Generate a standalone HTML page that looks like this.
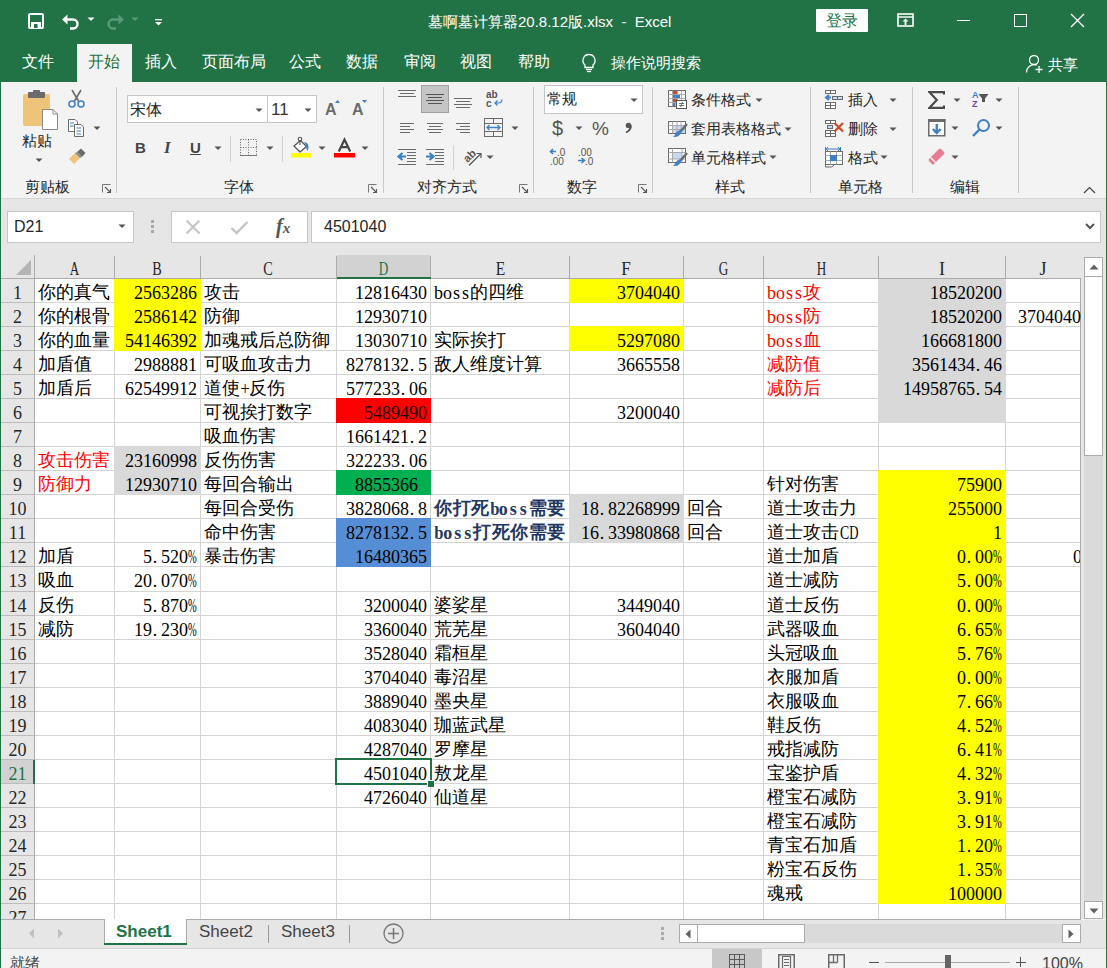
<!DOCTYPE html><html><head><meta charset="utf-8"><style>html,body{margin:0;padding:0;}body{width:1107px;height:968px;position:relative;overflow:hidden;background:#f3f3f3;font-family:"Liberation Sans",sans-serif;}.c{position:absolute;white-space:nowrap;overflow:hidden;font-family:"Liberation Serif",serif;font-size:18px;line-height:23px;color:#000;}.h{position:absolute;font-family:"Liberation Serif",serif;font-size:18px;line-height:23px;color:#262626;text-align:center;}.n{display:inline-block;width:9px;text-align:center;}</style></head><body>
<div style="position:absolute;left:0px;top:0px;width:1107px;height:82px;background:#217346"></div>
<svg style="position:absolute;left:27px;top:12px;" width="18" height="18" viewBox="0 0 18 18"><rect x="2" y="2" width="14" height="14" rx="1" fill="none" stroke="#fff" stroke-width="2"/><rect x="4" y="10" width="10" height="6" fill="#fff"/><rect x="7" y="12" width="3.5" height="4" fill="#217346"/></svg>
<svg style="position:absolute;left:61px;top:13px;" width="20" height="18" viewBox="0 0 20 18"><path d="M3 6.5 H12 A4.5 4.5 0 0 1 12 15.5 H9" fill="none" stroke="#fff" stroke-width="2.4"/><path d="M1 6.5 L6.5 1.5 L6.5 11.5 Z" fill="#fff"/></svg>
<svg style="position:absolute;left:87px;top:17px;" width="8" height="5" viewBox="0 0 8 5"><path d="M0.5 0.5 L7.5 0.5 L4 4 Z" fill="#fff"/></svg>
<svg style="position:absolute;left:105px;top:13px;" width="20" height="18" viewBox="0 0 20 18"><path d="M17 6.5 H8 A4.5 4.5 0 0 0 8 15.5 H11" fill="none" stroke="#5a9a78" stroke-width="2.4"/><path d="M19 6.5 L13.5 1.5 L13.5 11.5 Z" fill="#5a9a78"/></svg>
<svg style="position:absolute;left:131px;top:17px;" width="8" height="5" viewBox="0 0 8 5"><path d="M0.5 0.5 L7.5 0.5 L4 4 Z" fill="#5a9a78"/></svg>
<svg style="position:absolute;left:154px;top:18px;" width="9" height="9" viewBox="0 0 9 9"><rect x="1" y="1" width="7" height="1.3" fill="#fff"/><path d="M1 4 H8 L4.5 7.5 Z" fill="#fff"/></svg>
<div style="position:absolute;left:428px;top:12px;font-family:'Liberation Sans',sans-serif;font-size:15px;line-height:19px;color:#fff;white-space:nowrap;">墓啊墓计算器20.8.12版.xlsx&nbsp; -&nbsp; Excel</div>
<div style="position:absolute;left:816px;top:9px;width:52px;height:23px;background:#fff;border-radius:1px"></div>
<div style="position:absolute;left:826px;top:11px;font-family:'Liberation Sans',sans-serif;font-size:16px;line-height:20px;color:#217346;white-space:nowrap;">登录</div>
<svg style="position:absolute;left:897px;top:13px;" width="17" height="14" viewBox="0 0 17 14"><rect x="1" y="1" width="15" height="12" fill="none" stroke="#fff" stroke-width="1.6"/><line x1="1" y1="4" x2="16" y2="4" stroke="#fff" stroke-width="1.4"/><path d="M8.5 5.5 L5.5 8.5 H7.6 V12 H9.4 V8.5 H11.5 Z" fill="#fff"/></svg>
<div style="position:absolute;left:957px;top:20px;width:13px;height:1px;background:#fff"></div>
<div style="position:absolute;left:1014px;top:14px;width:11px;height:11px;border:1px solid #fff"></div>
<svg style="position:absolute;left:1070px;top:13px;" width="15" height="15" viewBox="0 0 15 15"><path d="M1 1 L14 14 M14 1 L1 14" stroke="#fff" stroke-width="1.3"/></svg>
<div style="position:absolute;left:77px;top:44px;width:55px;height:38px;background:#f3f3f3"></div>
<div style="position:absolute;left:22px;top:52px;font-family:'Liberation Sans',sans-serif;font-size:16px;line-height:20px;color:#fff;white-space:nowrap;">文件</div>
<div style="position:absolute;left:88px;top:52px;font-family:'Liberation Sans',sans-serif;font-size:16px;line-height:20px;color:#217346;white-space:nowrap;">开始</div>
<div style="position:absolute;left:145px;top:52px;font-family:'Liberation Sans',sans-serif;font-size:16px;line-height:20px;color:#fff;white-space:nowrap;">插入</div>
<div style="position:absolute;left:202px;top:52px;font-family:'Liberation Sans',sans-serif;font-size:16px;line-height:20px;color:#fff;white-space:nowrap;">页面布局</div>
<div style="position:absolute;left:289px;top:52px;font-family:'Liberation Sans',sans-serif;font-size:16px;line-height:20px;color:#fff;white-space:nowrap;">公式</div>
<div style="position:absolute;left:346px;top:52px;font-family:'Liberation Sans',sans-serif;font-size:16px;line-height:20px;color:#fff;white-space:nowrap;">数据</div>
<div style="position:absolute;left:404px;top:52px;font-family:'Liberation Sans',sans-serif;font-size:16px;line-height:20px;color:#fff;white-space:nowrap;">审阅</div>
<div style="position:absolute;left:460px;top:52px;font-family:'Liberation Sans',sans-serif;font-size:16px;line-height:20px;color:#fff;white-space:nowrap;">视图</div>
<div style="position:absolute;left:518px;top:52px;font-family:'Liberation Sans',sans-serif;font-size:16px;line-height:20px;color:#fff;white-space:nowrap;">帮助</div>
<div style="position:absolute;left:611px;top:53px;font-family:'Liberation Sans',sans-serif;font-size:15px;line-height:19px;color:#fff;white-space:nowrap;">操作说明搜索</div>
<svg style="position:absolute;left:580px;top:53px;" width="18" height="20" viewBox="0 0 18 20"><path d="M9 1.5 A6 6 0 0 0 5 12 V14.5 H13 V12 A6 6 0 0 0 9 1.5 Z" fill="none" stroke="#fff" stroke-width="1.3"/><line x1="6" y1="16.5" x2="12" y2="16.5" stroke="#fff" stroke-width="1.3"/><line x1="7" y1="18.5" x2="11" y2="18.5" stroke="#fff" stroke-width="1.3"/></svg>
<svg style="position:absolute;left:1025px;top:54px;" width="19" height="20" viewBox="0 0 19 20"><circle cx="9" cy="6" r="4.5" fill="none" stroke="#fff" stroke-width="1.3"/><path d="M1.5 18.5 A8 8 0 0 1 12 11" fill="none" stroke="#fff" stroke-width="1.3"/><path d="M14 12 V19 M10.5 15.5 H17.5" stroke="#fff" stroke-width="1.3"/></svg>
<div style="position:absolute;left:1048px;top:55px;font-family:'Liberation Sans',sans-serif;font-size:15px;line-height:19px;color:#fff;white-space:nowrap;">共享</div>
<div style="position:absolute;left:1px;top:82px;width:1105px;height:116px;background:#f3f3f3"></div>
<div style="position:absolute;left:1px;top:198px;width:1105px;height:1px;background:#d6d6d6"></div>
<div style="position:absolute;left:116px;top:87px;width:1px;height:106px;background:#c8c8c8"></div>
<div style="position:absolute;left:383px;top:87px;width:1px;height:106px;background:#c8c8c8"></div>
<div style="position:absolute;left:533px;top:87px;width:1px;height:106px;background:#c8c8c8"></div>
<div style="position:absolute;left:652px;top:87px;width:1px;height:106px;background:#c8c8c8"></div>
<div style="position:absolute;left:810px;top:87px;width:1px;height:106px;background:#c8c8c8"></div>
<div style="position:absolute;left:912px;top:87px;width:1px;height:106px;background:#c8c8c8"></div>
<div style="position:absolute;left:1018px;top:87px;width:1px;height:106px;background:#c8c8c8"></div>
<div style="position:absolute;left:25px;top:177px;font-family:'Liberation Sans',sans-serif;font-size:15px;line-height:19px;color:#262626;white-space:nowrap;">剪贴板</div>
<div style="position:absolute;left:224px;top:177px;font-family:'Liberation Sans',sans-serif;font-size:15px;line-height:19px;color:#262626;white-space:nowrap;">字体</div>
<div style="position:absolute;left:417px;top:177px;font-family:'Liberation Sans',sans-serif;font-size:15px;line-height:19px;color:#262626;white-space:nowrap;">对齐方式</div>
<div style="position:absolute;left:567px;top:177px;font-family:'Liberation Sans',sans-serif;font-size:15px;line-height:19px;color:#262626;white-space:nowrap;">数字</div>
<div style="position:absolute;left:715px;top:177px;font-family:'Liberation Sans',sans-serif;font-size:15px;line-height:19px;color:#262626;white-space:nowrap;">样式</div>
<div style="position:absolute;left:838px;top:177px;font-family:'Liberation Sans',sans-serif;font-size:15px;line-height:19px;color:#262626;white-space:nowrap;">单元格</div>
<div style="position:absolute;left:950px;top:177px;font-family:'Liberation Sans',sans-serif;font-size:15px;line-height:19px;color:#262626;white-space:nowrap;">编辑</div>
<svg style="position:absolute;left:102px;top:184px;" width="10" height="9" viewBox="0 0 10 9"><path d="M0.5 8.5 V0.5 H8.5" fill="none" stroke="#777" stroke-width="1"/><path d="M3 3 L8.5 8.5 M8.5 5 V8.5 H5" fill="none" stroke="#555" stroke-width="1.1"/></svg>
<svg style="position:absolute;left:368px;top:184px;" width="10" height="9" viewBox="0 0 10 9"><path d="M0.5 8.5 V0.5 H8.5" fill="none" stroke="#777" stroke-width="1"/><path d="M3 3 L8.5 8.5 M8.5 5 V8.5 H5" fill="none" stroke="#555" stroke-width="1.1"/></svg>
<svg style="position:absolute;left:519px;top:184px;" width="10" height="9" viewBox="0 0 10 9"><path d="M0.5 8.5 V0.5 H8.5" fill="none" stroke="#777" stroke-width="1"/><path d="M3 3 L8.5 8.5 M8.5 5 V8.5 H5" fill="none" stroke="#555" stroke-width="1.1"/></svg>
<svg style="position:absolute;left:638px;top:184px;" width="10" height="9" viewBox="0 0 10 9"><path d="M0.5 8.5 V0.5 H8.5" fill="none" stroke="#777" stroke-width="1"/><path d="M3 3 L8.5 8.5 M8.5 5 V8.5 H5" fill="none" stroke="#555" stroke-width="1.1"/></svg>
<svg style="position:absolute;left:1083px;top:186px;" width="13" height="8" viewBox="0 0 13 8"><path d="M1 7 L6.5 1.5 L12 7" fill="none" stroke="#444" stroke-width="1.2"/></svg>
<svg style="position:absolute;left:22px;top:90px;" width="37" height="41" viewBox="0 0 37 41"><rect x="1" y="4" width="27" height="32" rx="2" fill="#eec47b"/><rect x="6" y="2" width="17" height="6" rx="1" fill="#6b6b6b"/><rect x="11" y="0" width="7" height="4" rx="1" fill="#6b6b6b"/><path d="M20.5 19.5 H31 L35.5 24 V39.5 H20.5 Z" fill="#fff" stroke="#8a8a8a" stroke-width="1"/><path d="M31 19.5 V24 H35.5" fill="none" stroke="#8a8a8a" stroke-width="1"/></svg>
<div style="position:absolute;left:22px;top:131px;font-family:'Liberation Sans',sans-serif;font-size:15px;line-height:19px;color:#262626;white-space:nowrap;">粘贴</div>
<svg style="position:absolute;left:35px;top:158px;" width="8" height="5" viewBox="0 0 8 5"><path d="M0.5 0.5 L7.5 0.5 L4 4 Z" fill="#555"/></svg>
<svg style="position:absolute;left:67px;top:89px;" width="19" height="20" viewBox="0 0 19 20"><path d="M5 1 L11.5 12 M14 1 L7.5 12" stroke="#6b6b6b" stroke-width="1.6"/><circle cx="5" cy="15" r="3" fill="none" stroke="#3f7fc4" stroke-width="1.5"/><circle cx="14" cy="15" r="3" fill="none" stroke="#3f7fc4" stroke-width="1.5"/></svg>
<svg style="position:absolute;left:67px;top:118px;" width="19" height="20" viewBox="0 0 19 20"><path d="M1.5 1.5 H8 L10.5 4 V13.5 H1.5 Z" fill="#fff" stroke="#6b6b6b"/><path d="M7.5 6.5 H14 L16.5 9 V18.5 H7.5 Z" fill="#fff" stroke="#6b6b6b"/><path d="M3 5 H7 M3 8 H7 M9.5 10 H14 M9.5 13 H14 M9.5 16 H14" stroke="#3f7fc4" stroke-width="1"/></svg>
<svg style="position:absolute;left:93px;top:126px;" width="8" height="5" viewBox="0 0 8 5"><path d="M0.5 0.5 L7.5 0.5 L4 4 Z" fill="#555"/></svg>
<svg style="position:absolute;left:68px;top:148px;" width="19" height="18" viewBox="0 0 19 18"><path d="M1 11 L7 5 L12 10 L6 16 Z" fill="#eec47b"/><path d="M9 4 L13 0.5 L17.5 5 L14 9 Z" fill="#6b6b6b"/><path d="M7 5 L9 4 L14 9 L12 10 Z" fill="#8a8a8a"/></svg>
<div style="position:absolute;left:127px;top:95px;width:141px;height:28px;background:#fff;border:1px solid #c6c6c6;box-sizing:border-box"></div>
<div style="position:absolute;left:267px;top:95px;width:50px;height:28px;background:#fff;border:1px solid #c6c6c6;box-sizing:border-box"></div>
<div style="position:absolute;left:130px;top:100px;font-family:'Liberation Sans',sans-serif;font-size:16px;line-height:20px;color:#262626;white-space:nowrap;">宋体</div>
<div style="position:absolute;left:271px;top:99px;font-family:'Liberation Sans',sans-serif;font-size:17px;line-height:21px;color:#333;white-space:nowrap;">11</div>
<svg style="position:absolute;left:255px;top:108px;" width="8" height="5" viewBox="0 0 8 5"><path d="M0.5 0.5 L7.5 0.5 L4 4 Z" fill="#555"/></svg>
<svg style="position:absolute;left:304px;top:108px;" width="8" height="5" viewBox="0 0 8 5"><path d="M0.5 0.5 L7.5 0.5 L4 4 Z" fill="#555"/></svg>
<svg style="position:absolute;left:325px;top:99px;" width="16" height="17" viewBox="0 0 16 17"><text x="0" y="16" font-family="Liberation Sans" font-size="16" font-weight="bold" fill="#6b6b6b">A</text><path d="M10 4 L12.5 1 L15 4 Z" fill="#3f7fc4"/></svg>
<svg style="position:absolute;left:352px;top:99px;" width="16" height="17" viewBox="0 0 16 17"><text x="0" y="16" font-family="Liberation Sans" font-size="16" font-weight="bold" fill="#6b6b6b">A</text><path d="M10 1 L12.5 4 L15 1 Z" fill="#3f7fc4"/></svg>
<div style="position:absolute;left:135px;top:138px;font-family:'Liberation Sans',sans-serif;font-size:15px;line-height:19px;color:#444;white-space:nowrap;font-weight:bold">B</div>
<div style="position:absolute;left:164px;top:137px;font-family:'Liberation Serif',serif;font-size:17px;line-height:21px;color:#444;white-space:nowrap;font-style:italic;font-weight:bold">I</div>
<div style="position:absolute;left:190px;top:138px;font-family:'Liberation Sans',sans-serif;font-size:15px;line-height:19px;color:#444;white-space:nowrap;text-decoration:underline;font-weight:bold">U</div>
<svg style="position:absolute;left:214px;top:146px;" width="8" height="5" viewBox="0 0 8 5"><path d="M0.5 0.5 L7.5 0.5 L4 4 Z" fill="#555"/></svg>
<div style="position:absolute;left:230px;top:136px;width:1px;height:26px;background:#d0d0d0"></div>
<svg style="position:absolute;left:239px;top:138px;" width="19" height="19" viewBox="0 0 19 19"><path d="M1.5 1.5 H17.5 V17.5 M1.5 1.5 V17.5 M9.5 1.5 V17.5 M1.5 9.5 H17.5" fill="none" stroke="#666" stroke-width="1" stroke-dasharray="1 1.5"/><path d="M1 17.5 H18" stroke="#777" stroke-width="1"/></svg>
<svg style="position:absolute;left:266px;top:146px;" width="8" height="5" viewBox="0 0 8 5"><path d="M0.5 0.5 L7.5 0.5 L4 4 Z" fill="#555"/></svg>
<div style="position:absolute;left:282px;top:136px;width:1px;height:26px;background:#d0d0d0"></div>
<svg style="position:absolute;left:290px;top:136px;" width="22" height="22" viewBox="0 0 22 22"><path d="M4 10 L10.5 4.5 L16.5 10.5 L10 16 Z" fill="#fff" stroke="#555" stroke-width="1.3" stroke-linejoin="round"/><circle cx="10" cy="3" r="1.8" fill="none" stroke="#555" stroke-width="1.1"/><path d="M10 4.5 V9" stroke="#555" stroke-width="1.1"/><path d="M14 6 Q18.5 6.5 18.5 11 Q18.5 13.5 17.2 15 Q16 12 16 9 Z" fill="#3f7fc4"/><rect x="1" y="17" width="20" height="4.5" fill="#ffff00"/></svg>
<svg style="position:absolute;left:318px;top:146px;" width="8" height="5" viewBox="0 0 8 5"><path d="M0.5 0.5 L7.5 0.5 L4 4 Z" fill="#555"/></svg>
<svg style="position:absolute;left:334px;top:136px;" width="21" height="22" viewBox="0 0 21 22"><path d="M4.8 15.5 L10.5 3.5 L16.2 15.5 M7 11.2 H14" fill="none" stroke="#444" stroke-width="2.2"/><rect x="0" y="17" width="21" height="4.5" fill="#ff0000"/></svg>
<svg style="position:absolute;left:361px;top:146px;" width="8" height="5" viewBox="0 0 8 5"><path d="M0.5 0.5 L7.5 0.5 L4 4 Z" fill="#555"/></svg>
<svg style="position:absolute;left:396px;top:88px;" width="24" height="24" viewBox="0 0 24 24"><rect x="2" y="2" width="18" height="1" fill="#6b6b6b"/><rect x="4" y="5" width="14" height="1" fill="#6b6b6b"/><rect x="2" y="8" width="18" height="1" fill="#6b6b6b"/></svg>
<div style="position:absolute;left:421px;top:85px;width:28px;height:28px;background:#c5c5c5;border:1px solid #a0a0a0;box-sizing:border-box"></div>
<svg style="position:absolute;left:424px;top:92px;" width="24" height="24" viewBox="0 0 24 24"><rect x="2" y="2" width="18" height="1" fill="#555"/><rect x="4" y="5" width="14" height="1" fill="#555"/><rect x="2" y="8" width="18" height="1" fill="#555"/><rect x="4" y="11" width="14" height="1" fill="#555"/></svg>
<svg style="position:absolute;left:452px;top:96px;" width="24" height="24" viewBox="0 0 24 24"><rect x="2" y="2" width="18" height="1" fill="#6b6b6b"/><rect x="4" y="5" width="14" height="1" fill="#6b6b6b"/><rect x="2" y="8" width="18" height="1" fill="#6b6b6b"/><rect x="4" y="11" width="14" height="1" fill="#6b6b6b"/></svg>
<svg style="position:absolute;left:485px;top:90px;" width="19" height="18" viewBox="0 0 19 18"><text x="1" y="8" font-family="Liberation Sans" font-size="10" font-weight="bold" fill="#555">ab</text><text x="1" y="17" font-family="Liberation Sans" font-size="10" font-weight="bold" fill="#555">c</text><path d="M17 9.5 Q17 13 13 13 H10 M12.5 10.5 L10 13 L12.5 15.5" fill="none" stroke="#3f7fc4" stroke-width="1.2"/></svg>
<svg style="position:absolute;left:396px;top:120px;" width="24" height="24" viewBox="0 0 24 24"><rect x="4" y="3" width="14" height="1" fill="#6b6b6b"/><rect x="4" y="6" width="10" height="1" fill="#6b6b6b"/><rect x="4" y="9" width="14" height="1" fill="#6b6b6b"/><rect x="4" y="12" width="10" height="1" fill="#6b6b6b"/></svg>
<svg style="position:absolute;left:424px;top:120px;" width="24" height="24" viewBox="0 0 24 24"><rect x="3" y="3" width="16" height="1" fill="#6b6b6b"/><rect x="5" y="6" width="12" height="1" fill="#6b6b6b"/><rect x="3" y="9" width="16" height="1" fill="#6b6b6b"/><rect x="5" y="12" width="12" height="1" fill="#6b6b6b"/></svg>
<svg style="position:absolute;left:452px;top:120px;" width="24" height="24" viewBox="0 0 24 24"><rect x="4" y="3" width="14" height="1" fill="#6b6b6b"/><rect x="8" y="6" width="10" height="1" fill="#6b6b6b"/><rect x="4" y="9" width="14" height="1" fill="#6b6b6b"/><rect x="8" y="12" width="10" height="1" fill="#6b6b6b"/></svg>
<svg style="position:absolute;left:484px;top:118px;" width="19" height="19" viewBox="0 0 19 19"><rect x="0.5" y="0.5" width="18" height="18" fill="none" stroke="#6b6b6b"/><path d="M0.5 5.5 H18.5 M0.5 13.5 H18.5 M9.5 0.5 V5.5 M9.5 13.5 V18.5" stroke="#6b6b6b"/><path d="M3 9.5 H16 M5.5 7 L3 9.5 L5.5 12 M13.5 7 L16 9.5 L13.5 12" fill="none" stroke="#3f7fc4" stroke-width="1.3"/></svg>
<svg style="position:absolute;left:511px;top:126px;" width="8" height="5" viewBox="0 0 8 5"><path d="M0.5 0.5 L7.5 0.5 L4 4 Z" fill="#555"/></svg>
<svg style="position:absolute;left:396px;top:147px;" width="22" height="20" viewBox="0 0 22 20"><rect x="2" y="2" width="18" height="1" fill="#6b6b6b"/><rect x="11" y="5" width="9" height="1" fill="#6b6b6b"/><rect x="11" y="8" width="9" height="1" fill="#6b6b6b"/><rect x="11" y="11" width="9" height="1" fill="#6b6b6b"/><rect x="11" y="14" width="9" height="1" fill="#6b6b6b"/><rect x="2" y="17" width="18" height="1" fill="#6b6b6b"/><path d="M10 9.5 H3.5 M6.5 6 L2.5 9.5 L6.5 13" fill="none" stroke="#3f7fc4" stroke-width="2.2"/></svg>
<svg style="position:absolute;left:424px;top:147px;" width="22" height="20" viewBox="0 0 22 20"><rect x="2" y="2" width="18" height="1" fill="#6b6b6b"/><rect x="11" y="5" width="9" height="1" fill="#6b6b6b"/><rect x="11" y="8" width="9" height="1" fill="#6b6b6b"/><rect x="11" y="11" width="9" height="1" fill="#6b6b6b"/><rect x="11" y="14" width="9" height="1" fill="#6b6b6b"/><rect x="2" y="17" width="18" height="1" fill="#6b6b6b"/><path d="M2 9.5 H8.5 M5.5 6 L9.5 9.5 L5.5 13" fill="none" stroke="#3f7fc4" stroke-width="2.2"/></svg>
<div style="position:absolute;left:453px;top:145px;width:1px;height:25px;background:#d0d0d0"></div>
<svg style="position:absolute;left:461px;top:146px;" width="22" height="21" viewBox="0 0 22 21"><text x="2" y="14" font-family="Liberation Sans" font-size="11" font-weight="bold" fill="#555" transform="rotate(-45 8 10)">ab</text><path d="M8 19.5 L20 7.5 M15.5 7.5 H20 V12" fill="none" stroke="#555" stroke-width="1.2"/></svg>
<svg style="position:absolute;left:486px;top:155px;" width="8" height="5" viewBox="0 0 8 5"><path d="M0.5 0.5 L7.5 0.5 L4 4 Z" fill="#555"/></svg>
<div style="position:absolute;left:544px;top:85px;width:99px;height:29px;background:#fff;border:1px solid #c6c6c6;box-sizing:border-box"></div>
<div style="position:absolute;left:547px;top:89px;font-family:'Liberation Sans',sans-serif;font-size:15px;line-height:19px;color:#262626;white-space:nowrap;">常规</div>
<svg style="position:absolute;left:630px;top:98px;" width="8" height="5" viewBox="0 0 8 5"><path d="M0.5 0.5 L7.5 0.5 L4 4 Z" fill="#555"/></svg>
<div style="position:absolute;left:552px;top:116px;font-family:'Liberation Sans',sans-serif;font-size:20px;line-height:24px;color:#555;white-space:nowrap;">$</div>
<svg style="position:absolute;left:575px;top:126px;" width="8" height="5" viewBox="0 0 8 5"><path d="M0.5 0.5 L7.5 0.5 L4 4 Z" fill="#555"/></svg>
<div style="position:absolute;left:592px;top:117px;font-family:'Liberation Sans',sans-serif;font-size:19px;line-height:23px;color:#555;white-space:nowrap;">%</div>
<svg style="position:absolute;left:624px;top:122px;" width="8" height="11" viewBox="0 0 8 11"><circle cx="4.5" cy="3.5" r="2.8" fill="#555"/><path d="M7 3.5 Q7 8 2 10.5" fill="none" stroke="#555" stroke-width="1.8"/></svg>
<svg style="position:absolute;left:549px;top:147px;" width="18" height="19" viewBox="0 0 18 19"><path d="M7 4.5 H2 M4 2 L1.5 4.5 L4 7" fill="none" stroke="#3f7fc4" stroke-width="1.6"/><text x="8" y="9" font-family="Liberation Sans" font-size="10" fill="#555">.0</text><text x="1" y="18" font-family="Liberation Sans" font-size="10" fill="#555">.00</text></svg>
<svg style="position:absolute;left:577px;top:147px;" width="18" height="19" viewBox="0 0 18 19"><text x="1" y="9" font-family="Liberation Sans" font-size="10" fill="#555">.00</text><path d="M1 13.5 H7 M4.5 11 L7.5 13.5 L4.5 16" fill="none" stroke="#3f7fc4" stroke-width="1.6"/><text x="8" y="18" font-family="Liberation Sans" font-size="10" fill="#555">.0</text></svg>
<svg style="position:absolute;left:668px;top:90px;" width="20" height="20" viewBox="0 0 20 20"><rect x="0.5" y="0.5" width="17" height="16" fill="#fff" stroke="#6b6b6b"/><path d="M0.5 4.5 H17.5 M0.5 8.5 H17.5 M0.5 12.5 H17.5 M4.5 0.5 V16.5 M9.5 0.5 V16.5 M13.5 0.5 V16.5" stroke="#aaa"/><rect x="5" y="1" width="4" height="3" fill="#d24726"/><rect x="5" y="5" width="7" height="3" fill="#3f7fc4"/><rect x="5" y="9" width="4" height="3" fill="#d24726"/><rect x="5" y="13" width="2.5" height="3" fill="#3f7fc4"/><rect x="8.5" y="10.5" width="10" height="8" fill="#fff" stroke="#555"/><path d="M11 13.5 H16 M11 15.5 H16 M14.5 12 L12.5 17" stroke="#555" stroke-width="0.8"/></svg>
<div style="position:absolute;left:691px;top:90px;font-family:'Liberation Sans',sans-serif;font-size:15px;line-height:19px;color:#262626;white-space:nowrap;">条件格式</div>
<svg style="position:absolute;left:755px;top:98px;" width="8" height="5" viewBox="0 0 8 5"><path d="M0.5 0.5 L7.5 0.5 L4 4 Z" fill="#555"/></svg>
<svg style="position:absolute;left:668px;top:121px;" width="20" height="20" viewBox="0 0 20 20"><rect x="0.5" y="0.5" width="17" height="12" fill="#fff" stroke="#6b6b6b"/><rect x="5" y="4" width="12" height="8" fill="#c5d9f1"/><path d="M0.5 4.5 H17.5 M0.5 8.5 H17.5 M4.5 0.5 V12.5 M9 0.5 V12.5 M13 0.5 V12.5" stroke="#aaa"/><g transform="translate(0 0)"><path d="M19 3 L12.5 10.5" stroke="#6b6b6b" stroke-width="2.6"/><path d="M12.5 9 Q9 9.5 7.5 12.5 Q6.5 15 5 16 Q10 16.5 12 13.5 L13.5 11 Z" fill="#3f7fc4"/></g></svg>
<div style="position:absolute;left:691px;top:119px;font-family:'Liberation Sans',sans-serif;font-size:15px;line-height:19px;color:#262626;white-space:nowrap;">套用表格格式</div>
<svg style="position:absolute;left:784px;top:127px;" width="8" height="5" viewBox="0 0 8 5"><path d="M0.5 0.5 L7.5 0.5 L4 4 Z" fill="#555"/></svg>
<svg style="position:absolute;left:668px;top:148px;" width="20" height="20" viewBox="0 0 20 20"><rect x="0.5" y="0.5" width="17" height="14" fill="#fff" stroke="#6b6b6b"/><rect x="5" y="4" width="9" height="7" fill="#c5d9f1"/><path d="M0.5 4.5 H17.5 M0.5 11 H17.5 M4.5 0.5 V14.5 M14 0.5 V14.5" stroke="#aaa"/><g transform="translate(0 2)"><path d="M19 3 L12.5 10.5" stroke="#6b6b6b" stroke-width="2.6"/><path d="M12.5 9 Q9 9.5 7.5 12.5 Q6.5 15 5 16 Q10 16.5 12 13.5 L13.5 11 Z" fill="#3f7fc4"/></g></svg>
<div style="position:absolute;left:691px;top:148px;font-family:'Liberation Sans',sans-serif;font-size:15px;line-height:19px;color:#262626;white-space:nowrap;">单元格样式</div>
<svg style="position:absolute;left:769px;top:155px;" width="8" height="5" viewBox="0 0 8 5"><path d="M0.5 0.5 L7.5 0.5 L4 4 Z" fill="#555"/></svg>
<svg style="position:absolute;left:824px;top:89px;" width="21" height="21" viewBox="0 0 21 21"><rect x="1.5" y="1.5" width="5" height="3" fill="#fff" stroke="#6b6b6b" stroke-width="1"/><rect x="6.5" y="1.5" width="5" height="3" fill="#fff" stroke="#6b6b6b" stroke-width="1"/><rect x="8.5" y="7.5" width="5" height="3" fill="#c5d9f1" stroke="#6b6b6b" stroke-width="1"/><rect x="13.5" y="7.5" width="5" height="3" fill="#c5d9f1" stroke="#6b6b6b" stroke-width="1"/><path d="M7 8.5 H2.5 M5 6 L2 8.5 L5 11" fill="none" stroke="#3f7fc4" stroke-width="2"/><rect x="1.5" y="13.5" width="5" height="3" fill="#fff" stroke="#6b6b6b" stroke-width="1"/><rect x="6.5" y="13.5" width="5" height="3" fill="#fff" stroke="#6b6b6b" stroke-width="1"/><rect x="1.5" y="16.5" width="5" height="3" fill="#fff" stroke="#6b6b6b" stroke-width="1"/><rect x="6.5" y="16.5" width="5" height="3" fill="#fff" stroke="#6b6b6b" stroke-width="1"/></svg>
<div style="position:absolute;left:848px;top:90px;font-family:'Liberation Sans',sans-serif;font-size:15px;line-height:19px;color:#262626;white-space:nowrap;">插入</div>
<svg style="position:absolute;left:889px;top:98px;" width="8" height="5" viewBox="0 0 8 5"><path d="M0.5 0.5 L7.5 0.5 L4 4 Z" fill="#555"/></svg>
<svg style="position:absolute;left:824px;top:119px;" width="21" height="20" viewBox="0 0 21 20"><rect x="1.5" y="1.5" width="5" height="3" fill="#fff" stroke="#6b6b6b" stroke-width="1"/><rect x="6.5" y="1.5" width="5" height="3" fill="#fff" stroke="#6b6b6b" stroke-width="1"/><rect x="3.5" y="6.5" width="5" height="3" fill="#c5d9f1" stroke="#6b6b6b" stroke-width="1"/><rect x="1.5" y="11.5" width="5" height="3" fill="#fff" stroke="#6b6b6b" stroke-width="1"/><rect x="6.5" y="11.5" width="5" height="3" fill="#fff" stroke="#6b6b6b" stroke-width="1"/><rect x="1.5" y="14.5" width="5" height="3" fill="#fff" stroke="#6b6b6b" stroke-width="1"/><rect x="6.5" y="14.5" width="5" height="3" fill="#fff" stroke="#6b6b6b" stroke-width="1"/><path d="M10.5 4 L19 12.5 M19 4 L10.5 12.5" stroke="#d24726" stroke-width="2.2"/></svg>
<div style="position:absolute;left:848px;top:119px;font-family:'Liberation Sans',sans-serif;font-size:15px;line-height:19px;color:#262626;white-space:nowrap;">删除</div>
<svg style="position:absolute;left:889px;top:127px;" width="8" height="5" viewBox="0 0 8 5"><path d="M0.5 0.5 L7.5 0.5 L4 4 Z" fill="#555"/></svg>
<svg style="position:absolute;left:824px;top:146px;" width="20" height="22" viewBox="0 0 20 22"><path d="M2 3 H16 M4 1 L2 3 L4 5 M14 1 L16 3 L14 5" fill="none" stroke="#3f7fc4" stroke-width="1"/><path d="M1.5 1 V5 M16.5 1 V5" stroke="#3f7fc4"/><rect x="1.5" y="5.5" width="17" height="13" fill="#fff" stroke="#6b6b6b"/><path d="M1.5 9.5 H18.5 M1.5 14.5 H18.5 M6.5 5.5 V18.5 M12.5 5.5 V18.5" stroke="#aaa"/><rect x="6" y="9" width="7" height="6" fill="#3f7fc4"/><path d="M1.5 18.5 V21 H8 L10 19" fill="none" stroke="#6b6b6b"/></svg>
<div style="position:absolute;left:848px;top:148px;font-family:'Liberation Sans',sans-serif;font-size:15px;line-height:19px;color:#262626;white-space:nowrap;">格式</div>
<svg style="position:absolute;left:880px;top:155px;" width="8" height="5" viewBox="0 0 8 5"><path d="M0.5 0.5 L7.5 0.5 L4 4 Z" fill="#555"/></svg>
<svg style="position:absolute;left:928px;top:91px;" width="17" height="18" viewBox="0 0 17 18"><path d="M16 3.5 V1.2 H1.5 L8.8 9 L1.5 16.8 H16 V14.5" fill="none" stroke="#4a4a4a" stroke-width="2.2" stroke-linejoin="miter"/></svg>
<svg style="position:absolute;left:953px;top:98px;" width="8" height="5" viewBox="0 0 8 5"><path d="M0.5 0.5 L7.5 0.5 L4 4 Z" fill="#555"/></svg>
<svg style="position:absolute;left:971px;top:90px;" width="19" height="17" viewBox="0 0 19 17"><text x="1" y="8" font-family="Liberation Sans" font-size="9" font-weight="bold" fill="#3f7fc4">A</text><text x="1" y="16.5" font-family="Liberation Sans" font-size="9" font-weight="bold" fill="#7a3fb3">Z</text><path d="M7.5 4 H17.5 L14 8.5 V12 H11 V8.5 Z" fill="#555"/></svg>
<svg style="position:absolute;left:995px;top:98px;" width="8" height="5" viewBox="0 0 8 5"><path d="M0.5 0.5 L7.5 0.5 L4 4 Z" fill="#555"/></svg>
<svg style="position:absolute;left:928px;top:119px;" width="18" height="18" viewBox="0 0 18 18"><rect x="0.75" y="0.75" width="16" height="16" fill="#fff" stroke="#6b6b6b" stroke-width="1.5"/><rect x="0" y="0" width="17.5" height="3" fill="#6b6b6b"/><path d="M8.75 5 V14 M4.8 10 L8.75 14 L12.7 10" fill="none" stroke="#3f7fc4" stroke-width="2.4"/></svg>
<svg style="position:absolute;left:951px;top:126px;" width="8" height="5" viewBox="0 0 8 5"><path d="M0.5 0.5 L7.5 0.5 L4 4 Z" fill="#555"/></svg>
<svg style="position:absolute;left:971px;top:118px;" width="20" height="20" viewBox="0 0 20 20"><circle cx="12.5" cy="7.5" r="5.5" fill="none" stroke="#3f7fc4" stroke-width="2"/><path d="M8.5 11.5 L2 18" stroke="#3f7fc4" stroke-width="2.4"/></svg>
<svg style="position:absolute;left:995px;top:126px;" width="8" height="5" viewBox="0 0 8 5"><path d="M0.5 0.5 L7.5 0.5 L4 4 Z" fill="#555"/></svg>
<svg style="position:absolute;left:928px;top:147px;" width="18" height="18" viewBox="0 0 18 18"><path d="M1 12 L11 2 Q12 1 13 2 L16 5 Q17 6 16 7 L6 17 Q5 18 4 17 L1 14 Q0 13 1 12 Z" fill="#e87d8f"/><path d="M2.5 10.5 L7.5 15.5" stroke="#fff" stroke-width="1.2"/></svg>
<svg style="position:absolute;left:951px;top:155px;" width="8" height="5" viewBox="0 0 8 5"><path d="M0.5 0.5 L7.5 0.5 L4 4 Z" fill="#555"/></svg>
<div style="position:absolute;left:1px;top:199px;width:1105px;height:56px;background:#e6e6e6"></div>
<div style="position:absolute;left:7px;top:211px;width:127px;height:32px;background:#fff;border:1px solid #c6c6c6;box-sizing:border-box"></div>
<div style="position:absolute;left:14px;top:217px;font-family:'Liberation Sans',sans-serif;font-size:16px;line-height:20px;color:#262626;white-space:nowrap;">D21</div>
<svg style="position:absolute;left:118px;top:224px;" width="8" height="5" viewBox="0 0 8 5"><path d="M0.5 0.5 L7.5 0.5 L4 4 Z" fill="#555"/></svg>
<div style="position:absolute;left:151px;top:220px;width:3px;height:3px;background:#a8a8a8"></div>
<div style="position:absolute;left:151px;top:225px;width:3px;height:3px;background:#a8a8a8"></div>
<div style="position:absolute;left:151px;top:230px;width:3px;height:3px;background:#a8a8a8"></div>
<div style="position:absolute;left:171px;top:211px;width:137px;height:32px;background:#fff;border:1px solid #c6c6c6;box-sizing:border-box"></div>
<svg style="position:absolute;left:185px;top:219px;" width="16" height="16" viewBox="0 0 16 16"><path d="M1.5 1.5 L14.5 14.5 M14.5 1.5 L1.5 14.5" stroke="#c4c4c4" stroke-width="2"/></svg>
<svg style="position:absolute;left:230px;top:220px;" width="19" height="15" viewBox="0 0 19 15"><path d="M1.5 8 L6.5 13 L17.5 2" fill="none" stroke="#c4c4c4" stroke-width="2.4"/></svg>
<div style="position:absolute;left:276px;top:214px;font-family:'Liberation Serif',serif;font-size:20px;line-height:24px;color:#555;white-space:nowrap;font-weight:bold"><i>f</i><span style="font-size:15px"><i>x</i></span></div>
<div style="position:absolute;left:311px;top:211px;width:790px;height:32px;background:#fff;border:1px solid #c6c6c6;box-sizing:border-box"></div>
<div style="position:absolute;left:324px;top:217px;font-family:'Liberation Sans',sans-serif;font-size:16px;line-height:20px;color:#262626;white-space:nowrap;">4501040</div>
<svg style="position:absolute;left:1085px;top:223px;" width="10" height="7" viewBox="0 0 10 7"><path d="M1 1 L5 5 L9 1" fill="none" stroke="#555" stroke-width="2"/></svg>
<div style="position:absolute;left:35px;top:279px;width:1045px;height:640px;background:#fff"></div>
<div style="position:absolute;left:1px;top:255px;width:1080px;height:24px;background:#e6e6e6"></div>
<div style="position:absolute;left:1px;top:279px;width:33px;height:640px;background:#e6e6e6"></div>
<div style="position:absolute;left:337px;top:255px;width:93px;height:23px;background:#d2d2d2"></div>
<div style="position:absolute;left:1px;top:760px;width:33px;height:23px;background:#d2d2d2"></div>
<div style="position:absolute;left:114px;top:279px;width:1px;height:640px;background:#d4d4d4"></div>
<div style="position:absolute;left:200px;top:279px;width:1px;height:640px;background:#d4d4d4"></div>
<div style="position:absolute;left:336px;top:279px;width:1px;height:640px;background:#d4d4d4"></div>
<div style="position:absolute;left:430px;top:279px;width:1px;height:640px;background:#d4d4d4"></div>
<div style="position:absolute;left:569px;top:279px;width:1px;height:640px;background:#d4d4d4"></div>
<div style="position:absolute;left:683px;top:279px;width:1px;height:640px;background:#d4d4d4"></div>
<div style="position:absolute;left:763px;top:279px;width:1px;height:640px;background:#d4d4d4"></div>
<div style="position:absolute;left:878px;top:279px;width:1px;height:640px;background:#d4d4d4"></div>
<div style="position:absolute;left:1005px;top:279px;width:1px;height:640px;background:#d4d4d4"></div>
<div style="position:absolute;left:35px;top:302px;width:1045px;height:1px;background:#d4d4d4"></div>
<div style="position:absolute;left:35px;top:326px;width:1045px;height:1px;background:#d4d4d4"></div>
<div style="position:absolute;left:35px;top:350px;width:1045px;height:1px;background:#d4d4d4"></div>
<div style="position:absolute;left:35px;top:374px;width:1045px;height:1px;background:#d4d4d4"></div>
<div style="position:absolute;left:35px;top:398px;width:1045px;height:1px;background:#d4d4d4"></div>
<div style="position:absolute;left:35px;top:422px;width:1045px;height:1px;background:#d4d4d4"></div>
<div style="position:absolute;left:35px;top:446px;width:1045px;height:1px;background:#d4d4d4"></div>
<div style="position:absolute;left:35px;top:470px;width:1045px;height:1px;background:#d4d4d4"></div>
<div style="position:absolute;left:35px;top:494px;width:1045px;height:1px;background:#d4d4d4"></div>
<div style="position:absolute;left:35px;top:518px;width:1045px;height:1px;background:#d4d4d4"></div>
<div style="position:absolute;left:35px;top:542px;width:1045px;height:1px;background:#d4d4d4"></div>
<div style="position:absolute;left:35px;top:566px;width:1045px;height:1px;background:#d4d4d4"></div>
<div style="position:absolute;left:35px;top:591px;width:1045px;height:1px;background:#d4d4d4"></div>
<div style="position:absolute;left:35px;top:615px;width:1045px;height:1px;background:#d4d4d4"></div>
<div style="position:absolute;left:35px;top:639px;width:1045px;height:1px;background:#d4d4d4"></div>
<div style="position:absolute;left:35px;top:663px;width:1045px;height:1px;background:#d4d4d4"></div>
<div style="position:absolute;left:35px;top:687px;width:1045px;height:1px;background:#d4d4d4"></div>
<div style="position:absolute;left:35px;top:711px;width:1045px;height:1px;background:#d4d4d4"></div>
<div style="position:absolute;left:35px;top:735px;width:1045px;height:1px;background:#d4d4d4"></div>
<div style="position:absolute;left:35px;top:759px;width:1045px;height:1px;background:#d4d4d4"></div>
<div style="position:absolute;left:35px;top:783px;width:1045px;height:1px;background:#d4d4d4"></div>
<div style="position:absolute;left:35px;top:807px;width:1045px;height:1px;background:#d4d4d4"></div>
<div style="position:absolute;left:35px;top:831px;width:1045px;height:1px;background:#d4d4d4"></div>
<div style="position:absolute;left:35px;top:855px;width:1045px;height:1px;background:#d4d4d4"></div>
<div style="position:absolute;left:35px;top:879px;width:1045px;height:1px;background:#d4d4d4"></div>
<div style="position:absolute;left:35px;top:903px;width:1045px;height:1px;background:#d4d4d4"></div>
<div style="position:absolute;left:114px;top:279px;width:87px;height:72px;background:#ffff00"></div>
<div style="position:absolute;left:569px;top:279px;width:115px;height:24px;background:#ffff00"></div>
<div style="position:absolute;left:569px;top:326px;width:115px;height:25px;background:#ffff00"></div>
<div style="position:absolute;left:114px;top:446px;width:87px;height:49px;background:#d9d9d9"></div>
<div style="position:absolute;left:878px;top:279px;width:128px;height:144px;background:#d9d9d9"></div>
<div style="position:absolute;left:336px;top:398px;width:95px;height:25px;background:#ff0000"></div>
<div style="position:absolute;left:336px;top:470px;width:95px;height:25px;background:#00b050"></div>
<div style="position:absolute;left:336px;top:518px;width:95px;height:49px;background:#558ed5"></div>
<div style="position:absolute;left:569px;top:494px;width:115px;height:49px;background:#d9d9d9"></div>
<div style="position:absolute;left:878px;top:470px;width:128px;height:434px;background:#ffff00"></div>
<div style="position:absolute;left:1px;top:278px;width:1080px;height:1px;background:#ababab"></div>
<div style="position:absolute;left:34px;top:255px;width:1px;height:664px;background:#ababab"></div>
<div style="position:absolute;left:114px;top:256px;width:1px;height:22px;background:#ababab"></div>
<div style="position:absolute;left:200px;top:256px;width:1px;height:22px;background:#ababab"></div>
<div style="position:absolute;left:336px;top:256px;width:1px;height:22px;background:#ababab"></div>
<div style="position:absolute;left:430px;top:256px;width:1px;height:22px;background:#ababab"></div>
<div style="position:absolute;left:569px;top:256px;width:1px;height:22px;background:#ababab"></div>
<div style="position:absolute;left:683px;top:256px;width:1px;height:22px;background:#ababab"></div>
<div style="position:absolute;left:763px;top:256px;width:1px;height:22px;background:#ababab"></div>
<div style="position:absolute;left:878px;top:256px;width:1px;height:22px;background:#ababab"></div>
<div style="position:absolute;left:1005px;top:256px;width:1px;height:22px;background:#ababab"></div>
<div style="position:absolute;left:1px;top:302px;width:33px;height:1px;background:#bcbcbc"></div>
<div style="position:absolute;left:1px;top:326px;width:33px;height:1px;background:#bcbcbc"></div>
<div style="position:absolute;left:1px;top:350px;width:33px;height:1px;background:#bcbcbc"></div>
<div style="position:absolute;left:1px;top:374px;width:33px;height:1px;background:#bcbcbc"></div>
<div style="position:absolute;left:1px;top:398px;width:33px;height:1px;background:#bcbcbc"></div>
<div style="position:absolute;left:1px;top:422px;width:33px;height:1px;background:#bcbcbc"></div>
<div style="position:absolute;left:1px;top:446px;width:33px;height:1px;background:#bcbcbc"></div>
<div style="position:absolute;left:1px;top:470px;width:33px;height:1px;background:#bcbcbc"></div>
<div style="position:absolute;left:1px;top:494px;width:33px;height:1px;background:#bcbcbc"></div>
<div style="position:absolute;left:1px;top:518px;width:33px;height:1px;background:#bcbcbc"></div>
<div style="position:absolute;left:1px;top:542px;width:33px;height:1px;background:#bcbcbc"></div>
<div style="position:absolute;left:1px;top:566px;width:33px;height:1px;background:#bcbcbc"></div>
<div style="position:absolute;left:1px;top:591px;width:33px;height:1px;background:#bcbcbc"></div>
<div style="position:absolute;left:1px;top:615px;width:33px;height:1px;background:#bcbcbc"></div>
<div style="position:absolute;left:1px;top:639px;width:33px;height:1px;background:#bcbcbc"></div>
<div style="position:absolute;left:1px;top:663px;width:33px;height:1px;background:#bcbcbc"></div>
<div style="position:absolute;left:1px;top:687px;width:33px;height:1px;background:#bcbcbc"></div>
<div style="position:absolute;left:1px;top:711px;width:33px;height:1px;background:#bcbcbc"></div>
<div style="position:absolute;left:1px;top:735px;width:33px;height:1px;background:#bcbcbc"></div>
<div style="position:absolute;left:1px;top:759px;width:33px;height:1px;background:#bcbcbc"></div>
<div style="position:absolute;left:1px;top:783px;width:33px;height:1px;background:#bcbcbc"></div>
<div style="position:absolute;left:1px;top:807px;width:33px;height:1px;background:#bcbcbc"></div>
<div style="position:absolute;left:1px;top:831px;width:33px;height:1px;background:#bcbcbc"></div>
<div style="position:absolute;left:1px;top:855px;width:33px;height:1px;background:#bcbcbc"></div>
<div style="position:absolute;left:1px;top:879px;width:33px;height:1px;background:#bcbcbc"></div>
<div style="position:absolute;left:1px;top:903px;width:33px;height:1px;background:#bcbcbc"></div>
<div style="position:absolute;left:1080px;top:278px;width:1px;height:641px;background:#ababab"></div>
<div style="position:absolute;left:1px;top:919px;width:1080px;height:1px;background:#ababab"></div>
<svg style="position:absolute;left:15px;top:259px;" width="17" height="17" viewBox="0 0 17 17"><path d="M16 1 V16 H1 Z" fill="#b4b4b4"/></svg>
<div style="position:absolute;left:337px;top:277px;width:94px;height:2px;background:#217346"></div>
<div style="position:absolute;left:33px;top:760px;width:2px;height:24px;background:#217346"></div>
<div class="h" style="left:35px;top:258px;width:79px;color:#262626"><span style="display:inline-block;transform:scaleX(0.73)">A</span></div>
<div class="h" style="left:115px;top:258px;width:85px;color:#262626"><span style="display:inline-block;transform:scaleX(0.79)">B</span></div>
<div class="h" style="left:201px;top:258px;width:135px;color:#262626"><span style="display:inline-block;transform:scaleX(0.79)">C</span></div>
<div class="h" style="left:337px;top:258px;width:93px;color:#217346"><span style="display:inline-block;transform:scaleX(0.73)">D</span></div>
<div class="h" style="left:431px;top:258px;width:138px;color:#262626"><span style="display:inline-block;transform:scaleX(0.86)">E</span></div>
<div class="h" style="left:570px;top:258px;width:113px;color:#262626"><span style="display:inline-block;transform:scaleX(0.95)">F</span></div>
<div class="h" style="left:684px;top:258px;width:79px;color:#262626"><span style="display:inline-block;transform:scaleX(0.73)">G</span></div>
<div class="h" style="left:764px;top:258px;width:114px;color:#262626"><span style="display:inline-block;transform:scaleX(0.73)">H</span></div>
<div class="h" style="left:879px;top:258px;width:126px;color:#262626"><span style="display:inline-block;transform:scaleX(1.00)">I</span></div>
<div class="h" style="left:1006px;top:258px;width:74px;color:#262626"><span style="display:inline-block;transform:scaleX(1.00)">J</span></div>
<div class="h" style="left:1px;top:279px;width:33px;color:#262626;height:23px;overflow:hidden"><div style="position:relative;top:3px">1</div></div>
<div class="h" style="left:1px;top:303px;width:33px;color:#262626;height:23px;overflow:hidden"><div style="position:relative;top:3px">2</div></div>
<div class="h" style="left:1px;top:327px;width:33px;color:#262626;height:23px;overflow:hidden"><div style="position:relative;top:3px">3</div></div>
<div class="h" style="left:1px;top:351px;width:33px;color:#262626;height:23px;overflow:hidden"><div style="position:relative;top:3px">4</div></div>
<div class="h" style="left:1px;top:375px;width:33px;color:#262626;height:23px;overflow:hidden"><div style="position:relative;top:3px">5</div></div>
<div class="h" style="left:1px;top:399px;width:33px;color:#262626;height:23px;overflow:hidden"><div style="position:relative;top:3px">6</div></div>
<div class="h" style="left:1px;top:423px;width:33px;color:#262626;height:23px;overflow:hidden"><div style="position:relative;top:3px">7</div></div>
<div class="h" style="left:1px;top:447px;width:33px;color:#262626;height:23px;overflow:hidden"><div style="position:relative;top:3px">8</div></div>
<div class="h" style="left:1px;top:471px;width:33px;color:#262626;height:23px;overflow:hidden"><div style="position:relative;top:3px">9</div></div>
<div class="h" style="left:1px;top:495px;width:33px;color:#262626;height:23px;overflow:hidden"><div style="position:relative;top:3px">10</div></div>
<div class="h" style="left:1px;top:519px;width:33px;color:#262626;height:23px;overflow:hidden"><div style="position:relative;top:3px">11</div></div>
<div class="h" style="left:1px;top:543px;width:33px;color:#262626;height:23px;overflow:hidden"><div style="position:relative;top:3px">12</div></div>
<div class="h" style="left:1px;top:567px;width:33px;color:#262626;height:23px;overflow:hidden"><div style="position:relative;top:3px">13</div></div>
<div class="h" style="left:1px;top:592px;width:33px;color:#262626;height:23px;overflow:hidden"><div style="position:relative;top:3px">14</div></div>
<div class="h" style="left:1px;top:616px;width:33px;color:#262626;height:23px;overflow:hidden"><div style="position:relative;top:3px">15</div></div>
<div class="h" style="left:1px;top:640px;width:33px;color:#262626;height:23px;overflow:hidden"><div style="position:relative;top:3px">16</div></div>
<div class="h" style="left:1px;top:664px;width:33px;color:#262626;height:23px;overflow:hidden"><div style="position:relative;top:3px">17</div></div>
<div class="h" style="left:1px;top:688px;width:33px;color:#262626;height:23px;overflow:hidden"><div style="position:relative;top:3px">18</div></div>
<div class="h" style="left:1px;top:712px;width:33px;color:#262626;height:23px;overflow:hidden"><div style="position:relative;top:3px">19</div></div>
<div class="h" style="left:1px;top:736px;width:33px;color:#262626;height:23px;overflow:hidden"><div style="position:relative;top:3px">20</div></div>
<div class="h" style="left:1px;top:760px;width:33px;color:#217346;height:23px;overflow:hidden"><div style="position:relative;top:3px">21</div></div>
<div class="h" style="left:1px;top:784px;width:33px;color:#262626;height:23px;overflow:hidden"><div style="position:relative;top:3px">22</div></div>
<div class="h" style="left:1px;top:808px;width:33px;color:#262626;height:23px;overflow:hidden"><div style="position:relative;top:3px">23</div></div>
<div class="h" style="left:1px;top:832px;width:33px;color:#262626;height:23px;overflow:hidden"><div style="position:relative;top:3px">24</div></div>
<div class="h" style="left:1px;top:856px;width:33px;color:#262626;height:23px;overflow:hidden"><div style="position:relative;top:3px">25</div></div>
<div class="h" style="left:1px;top:880px;width:33px;color:#262626;height:23px;overflow:hidden"><div style="position:relative;top:3px">26</div></div>
<div class="h" style="left:1px;top:904px;width:33px;color:#262626;height:15px;overflow:hidden"><div style="position:relative;top:3px">27</div></div>
<div class="c" style="top:282px;height:23px;color:#000;left:38px;overflow:visible;"><span style="position:relative;top:-1px">你</span><span style="position:relative;top:-1px">的</span><span style="position:relative;top:-1px">真</span><span style="position:relative;top:-1px">气</span></div>
<div class="c" style="top:282px;height:23px;color:#000;left:115px;width:82px;text-align:right;overflow:visible;"><span class="n">2</span><span class="n">5</span><span class="n">6</span><span class="n">3</span><span class="n">2</span><span class="n">8</span><span class="n">6</span></div>
<div class="c" style="top:282px;height:23px;color:#000;left:204px;overflow:visible;"><span style="position:relative;top:-1px">攻</span><span style="position:relative;top:-1px">击</span></div>
<div class="c" style="top:282px;height:23px;color:#000;left:337px;width:90px;text-align:right;overflow:visible;"><span class="n">1</span><span class="n">2</span><span class="n">8</span><span class="n">1</span><span class="n">6</span><span class="n">4</span><span class="n">3</span><span class="n">0</span></div>
<div class="c" style="top:282px;height:23px;color:#000;left:434px;overflow:visible;"><span class="n">b</span><span class="n">o</span><span class="n">s</span><span class="n">s</span><span style="position:relative;top:-1px">的</span><span style="position:relative;top:-1px">四</span><span style="position:relative;top:-1px">维</span></div>
<div class="c" style="top:282px;height:23px;color:#000;left:570px;width:110px;text-align:right;overflow:visible;"><span class="n">3</span><span class="n">7</span><span class="n">0</span><span class="n">4</span><span class="n">0</span><span class="n">4</span><span class="n">0</span></div>
<div class="c" style="top:282px;height:23px;color:#ff0000;left:767px;overflow:visible;"><span class="n">b</span><span class="n">o</span><span class="n">s</span><span class="n">s</span><span style="position:relative;top:-1px">攻</span></div>
<div class="c" style="top:282px;height:23px;color:#000;left:879px;width:123px;text-align:right;overflow:visible;"><span class="n">1</span><span class="n">8</span><span class="n">5</span><span class="n">2</span><span class="n">0</span><span class="n">2</span><span class="n">0</span><span class="n">0</span></div>
<div class="c" style="top:306px;height:23px;color:#000;left:38px;overflow:visible;"><span style="position:relative;top:-1px">你</span><span style="position:relative;top:-1px">的</span><span style="position:relative;top:-1px">根</span><span style="position:relative;top:-1px">骨</span></div>
<div class="c" style="top:306px;height:23px;color:#000;left:115px;width:82px;text-align:right;overflow:visible;"><span class="n">2</span><span class="n">5</span><span class="n">8</span><span class="n">6</span><span class="n">1</span><span class="n">4</span><span class="n">2</span></div>
<div class="c" style="top:306px;height:23px;color:#000;left:204px;overflow:visible;"><span style="position:relative;top:-1px">防</span><span style="position:relative;top:-1px">御</span></div>
<div class="c" style="top:306px;height:23px;color:#000;left:337px;width:90px;text-align:right;overflow:visible;"><span class="n">1</span><span class="n">2</span><span class="n">9</span><span class="n">3</span><span class="n">0</span><span class="n">7</span><span class="n">1</span><span class="n">0</span></div>
<div class="c" style="top:306px;height:23px;color:#ff0000;left:767px;overflow:visible;"><span class="n">b</span><span class="n">o</span><span class="n">s</span><span class="n">s</span><span style="position:relative;top:-1px">防</span></div>
<div class="c" style="top:306px;height:23px;color:#000;left:879px;width:123px;text-align:right;overflow:visible;"><span class="n">1</span><span class="n">8</span><span class="n">5</span><span class="n">2</span><span class="n">0</span><span class="n">2</span><span class="n">0</span><span class="n">0</span></div>
<div class="c" style="top:306px;height:23px;color:#000;left:1018px;width:74px;text-align:right;overflow:hidden;text-align:left;"><span class="n">3</span><span class="n">7</span><span class="n">0</span><span class="n">4</span><span class="n">0</span><span class="n">4</span><span class="n">0</span></div>
<div class="c" style="top:330px;height:23px;color:#000;left:38px;overflow:visible;"><span style="position:relative;top:-1px">你</span><span style="position:relative;top:-1px">的</span><span style="position:relative;top:-1px">血</span><span style="position:relative;top:-1px">量</span></div>
<div class="c" style="top:330px;height:23px;color:#000;left:115px;width:82px;text-align:right;overflow:visible;"><span class="n">5</span><span class="n">4</span><span class="n">1</span><span class="n">4</span><span class="n">6</span><span class="n">3</span><span class="n">9</span><span class="n">2</span></div>
<div class="c" style="top:330px;height:23px;color:#000;left:204px;overflow:visible;"><span style="position:relative;top:-1px">加</span><span style="position:relative;top:-1px">魂</span><span style="position:relative;top:-1px">戒</span><span style="position:relative;top:-1px">后</span><span style="position:relative;top:-1px">总</span><span style="position:relative;top:-1px">防</span><span style="position:relative;top:-1px">御</span></div>
<div class="c" style="top:330px;height:23px;color:#000;left:337px;width:90px;text-align:right;overflow:visible;"><span class="n">1</span><span class="n">3</span><span class="n">0</span><span class="n">3</span><span class="n">0</span><span class="n">7</span><span class="n">1</span><span class="n">0</span></div>
<div class="c" style="top:330px;height:23px;color:#000;left:434px;overflow:visible;"><span style="position:relative;top:-1px">实</span><span style="position:relative;top:-1px">际</span><span style="position:relative;top:-1px">挨</span><span style="position:relative;top:-1px">打</span></div>
<div class="c" style="top:330px;height:23px;color:#000;left:570px;width:110px;text-align:right;overflow:visible;"><span class="n">5</span><span class="n">2</span><span class="n">9</span><span class="n">7</span><span class="n">0</span><span class="n">8</span><span class="n">0</span></div>
<div class="c" style="top:330px;height:23px;color:#ff0000;left:767px;overflow:visible;"><span class="n">b</span><span class="n">o</span><span class="n">s</span><span class="n">s</span><span style="position:relative;top:-1px">血</span></div>
<div class="c" style="top:330px;height:23px;color:#000;left:879px;width:123px;text-align:right;overflow:visible;"><span class="n">1</span><span class="n">6</span><span class="n">6</span><span class="n">6</span><span class="n">8</span><span class="n">1</span><span class="n">8</span><span class="n">0</span><span class="n">0</span></div>
<div class="c" style="top:354px;height:23px;color:#000;left:38px;overflow:visible;"><span style="position:relative;top:-1px">加</span><span style="position:relative;top:-1px">盾</span><span style="position:relative;top:-1px">值</span></div>
<div class="c" style="top:354px;height:23px;color:#000;left:115px;width:82px;text-align:right;overflow:visible;"><span class="n">2</span><span class="n">9</span><span class="n">8</span><span class="n">8</span><span class="n">8</span><span class="n">8</span><span class="n">1</span></div>
<div class="c" style="top:354px;height:23px;color:#000;left:204px;overflow:visible;"><span style="position:relative;top:-1px">可</span><span style="position:relative;top:-1px">吸</span><span style="position:relative;top:-1px">血</span><span style="position:relative;top:-1px">攻</span><span style="position:relative;top:-1px">击</span><span style="position:relative;top:-1px">力</span></div>
<div class="c" style="top:354px;height:23px;color:#000;left:337px;width:90px;text-align:right;overflow:visible;"><span class="n">8</span><span class="n">2</span><span class="n">7</span><span class="n">8</span><span class="n">1</span><span class="n">3</span><span class="n">2</span><span class="n" style="text-indent:-3px">.</span><span class="n">5</span></div>
<div class="c" style="top:354px;height:23px;color:#000;left:434px;overflow:visible;"><span style="position:relative;top:-1px">敌</span><span style="position:relative;top:-1px">人</span><span style="position:relative;top:-1px">维</span><span style="position:relative;top:-1px">度</span><span style="position:relative;top:-1px">计</span><span style="position:relative;top:-1px">算</span></div>
<div class="c" style="top:354px;height:23px;color:#000;left:570px;width:110px;text-align:right;overflow:visible;"><span class="n">3</span><span class="n">6</span><span class="n">6</span><span class="n">5</span><span class="n">5</span><span class="n">5</span><span class="n">8</span></div>
<div class="c" style="top:354px;height:23px;color:#ff0000;left:767px;overflow:visible;"><span style="position:relative;top:-1px">减</span><span style="position:relative;top:-1px">防</span><span style="position:relative;top:-1px">值</span></div>
<div class="c" style="top:354px;height:23px;color:#000;left:879px;width:123px;text-align:right;overflow:visible;"><span class="n">3</span><span class="n">5</span><span class="n">6</span><span class="n">1</span><span class="n">4</span><span class="n">3</span><span class="n">4</span><span class="n" style="text-indent:-3px">.</span><span class="n">4</span><span class="n">6</span></div>
<div class="c" style="top:378px;height:23px;color:#000;left:38px;overflow:visible;"><span style="position:relative;top:-1px">加</span><span style="position:relative;top:-1px">盾</span><span style="position:relative;top:-1px">后</span></div>
<div class="c" style="top:378px;height:23px;color:#000;left:115px;width:82px;text-align:right;overflow:visible;"><span class="n">6</span><span class="n">2</span><span class="n">5</span><span class="n">4</span><span class="n">9</span><span class="n">9</span><span class="n">1</span><span class="n">2</span></div>
<div class="c" style="top:378px;height:23px;color:#000;left:204px;overflow:visible;"><span style="position:relative;top:-1px">道</span><span style="position:relative;top:-1px">使</span><span class="n" style="transform:scaleX(0.91)">+</span><span style="position:relative;top:-1px">反</span><span style="position:relative;top:-1px">伤</span></div>
<div class="c" style="top:378px;height:23px;color:#000;left:337px;width:90px;text-align:right;overflow:visible;"><span class="n">5</span><span class="n">7</span><span class="n">7</span><span class="n">2</span><span class="n">3</span><span class="n">3</span><span class="n" style="text-indent:-3px">.</span><span class="n">0</span><span class="n">6</span></div>
<div class="c" style="top:378px;height:23px;color:#ff0000;left:767px;overflow:visible;"><span style="position:relative;top:-1px">减</span><span style="position:relative;top:-1px">防</span><span style="position:relative;top:-1px">后</span></div>
<div class="c" style="top:378px;height:23px;color:#000;left:879px;width:123px;text-align:right;overflow:visible;"><span class="n">1</span><span class="n">4</span><span class="n">9</span><span class="n">5</span><span class="n">8</span><span class="n">7</span><span class="n">6</span><span class="n">5</span><span class="n" style="text-indent:-3px">.</span><span class="n">5</span><span class="n">4</span></div>
<div class="c" style="top:402px;height:23px;color:#000;left:204px;overflow:visible;"><span style="position:relative;top:-1px">可</span><span style="position:relative;top:-1px">视</span><span style="position:relative;top:-1px">挨</span><span style="position:relative;top:-1px">打</span><span style="position:relative;top:-1px">数</span><span style="position:relative;top:-1px">字</span></div>
<div class="c" style="top:402px;height:23px;color:#200000;left:337px;width:90px;text-align:right;overflow:visible;"><span class="n">5</span><span class="n">4</span><span class="n">8</span><span class="n">9</span><span class="n">4</span><span class="n">9</span><span class="n">0</span></div>
<div class="c" style="top:402px;height:23px;color:#000;left:570px;width:110px;text-align:right;overflow:visible;"><span class="n">3</span><span class="n">2</span><span class="n">0</span><span class="n">0</span><span class="n">0</span><span class="n">4</span><span class="n">0</span></div>
<div class="c" style="top:426px;height:23px;color:#000;left:204px;overflow:visible;"><span style="position:relative;top:-1px">吸</span><span style="position:relative;top:-1px">血</span><span style="position:relative;top:-1px">伤</span><span style="position:relative;top:-1px">害</span></div>
<div class="c" style="top:426px;height:23px;color:#000;left:337px;width:90px;text-align:right;overflow:visible;"><span class="n">1</span><span class="n">6</span><span class="n">6</span><span class="n">1</span><span class="n">4</span><span class="n">2</span><span class="n">1</span><span class="n" style="text-indent:-3px">.</span><span class="n">2</span></div>
<div class="c" style="top:450px;height:23px;color:#ff0000;left:38px;overflow:visible;"><span style="position:relative;top:-1px">攻</span><span style="position:relative;top:-1px">击</span><span style="position:relative;top:-1px">伤</span><span style="position:relative;top:-1px">害</span></div>
<div class="c" style="top:450px;height:23px;color:#000;left:115px;width:82px;text-align:right;overflow:visible;"><span class="n">2</span><span class="n">3</span><span class="n">1</span><span class="n">6</span><span class="n">0</span><span class="n">9</span><span class="n">9</span><span class="n">8</span></div>
<div class="c" style="top:450px;height:23px;color:#000;left:204px;overflow:visible;"><span style="position:relative;top:-1px">反</span><span style="position:relative;top:-1px">伤</span><span style="position:relative;top:-1px">伤</span><span style="position:relative;top:-1px">害</span></div>
<div class="c" style="top:450px;height:23px;color:#000;left:337px;width:90px;text-align:right;overflow:visible;"><span class="n">3</span><span class="n">2</span><span class="n">2</span><span class="n">2</span><span class="n">3</span><span class="n">3</span><span class="n" style="text-indent:-3px">.</span><span class="n">0</span><span class="n">6</span></div>
<div class="c" style="top:474px;height:23px;color:#ff0000;left:38px;overflow:visible;"><span style="position:relative;top:-1px">防</span><span style="position:relative;top:-1px">御</span><span style="position:relative;top:-1px">力</span></div>
<div class="c" style="top:474px;height:23px;color:#000;left:115px;width:82px;text-align:right;overflow:visible;"><span class="n">1</span><span class="n">2</span><span class="n">9</span><span class="n">3</span><span class="n">0</span><span class="n">7</span><span class="n">1</span><span class="n">0</span></div>
<div class="c" style="top:474px;height:23px;color:#000;left:204px;overflow:visible;"><span style="position:relative;top:-1px">每</span><span style="position:relative;top:-1px">回</span><span style="position:relative;top:-1px">合</span><span style="position:relative;top:-1px">输</span><span style="position:relative;top:-1px">出</span></div>
<div class="c" style="top:474px;height:23px;color:#000;left:340px;width:93px;text-align:center;"><span class="n">8</span><span class="n">8</span><span class="n">5</span><span class="n">5</span><span class="n">3</span><span class="n">6</span><span class="n">6</span></div>
<div class="c" style="top:474px;height:23px;color:#000;left:767px;overflow:visible;"><span style="position:relative;top:-1px">针</span><span style="position:relative;top:-1px">对</span><span style="position:relative;top:-1px">伤</span><span style="position:relative;top:-1px">害</span></div>
<div class="c" style="top:474px;height:23px;color:#000;left:879px;width:123px;text-align:right;overflow:visible;"><span class="n">7</span><span class="n">5</span><span class="n">9</span><span class="n">0</span><span class="n">0</span></div>
<div class="c" style="top:498px;height:23px;color:#000;left:204px;overflow:visible;"><span style="position:relative;top:-1px">每</span><span style="position:relative;top:-1px">回</span><span style="position:relative;top:-1px">合</span><span style="position:relative;top:-1px">受</span><span style="position:relative;top:-1px">伤</span></div>
<div class="c" style="top:498px;height:23px;color:#000;left:337px;width:90px;text-align:right;overflow:visible;"><span class="n">3</span><span class="n">8</span><span class="n">2</span><span class="n">8</span><span class="n">0</span><span class="n">6</span><span class="n">8</span><span class="n" style="text-indent:-3px">.</span><span class="n">8</span></div>
<div class="c" style="top:498px;height:23px;color:#1f3864;font-weight:bold;letter-spacing:0.5px;left:434px;overflow:visible;"><span style="position:relative;top:-1px">你</span><span style="position:relative;top:-1px">打</span><span style="position:relative;top:-1px">死</span><span class="n" style="transform:scaleX(0.92)">b</span><span class="n" style="width:10px">o</span><span class="n" style="width:10px">s</span><span class="n" style="width:10px">s</span><span style="position:relative;top:-1px">需</span><span style="position:relative;top:-1px">要</span></div>
<div class="c" style="top:498px;height:23px;color:#000;left:570px;width:110px;text-align:right;overflow:visible;"><span class="n">1</span><span class="n">8</span><span class="n" style="text-indent:-3px">.</span><span class="n">8</span><span class="n">2</span><span class="n">2</span><span class="n">6</span><span class="n">8</span><span class="n">9</span><span class="n">9</span><span class="n">9</span></div>
<div class="c" style="top:498px;height:23px;color:#000;left:687px;overflow:visible;"><span style="position:relative;top:-1px">回</span><span style="position:relative;top:-1px">合</span></div>
<div class="c" style="top:498px;height:23px;color:#000;left:767px;overflow:visible;"><span style="position:relative;top:-1px">道</span><span style="position:relative;top:-1px">士</span><span style="position:relative;top:-1px">攻</span><span style="position:relative;top:-1px">击</span><span style="position:relative;top:-1px">力</span></div>
<div class="c" style="top:498px;height:23px;color:#000;left:879px;width:123px;text-align:right;overflow:visible;"><span class="n">2</span><span class="n">5</span><span class="n">5</span><span class="n">0</span><span class="n">0</span><span class="n">0</span></div>
<div class="c" style="top:522px;height:23px;color:#000;left:204px;overflow:visible;"><span style="position:relative;top:-1px">命</span><span style="position:relative;top:-1px">中</span><span style="position:relative;top:-1px">伤</span><span style="position:relative;top:-1px">害</span></div>
<div class="c" style="top:522px;height:23px;color:#000;left:337px;width:90px;text-align:right;overflow:visible;"><span class="n">8</span><span class="n">2</span><span class="n">7</span><span class="n">8</span><span class="n">1</span><span class="n">3</span><span class="n">2</span><span class="n" style="text-indent:-3px">.</span><span class="n">5</span></div>
<div class="c" style="top:522px;height:23px;color:#1f3864;font-weight:bold;letter-spacing:0.5px;left:434px;overflow:visible;"><span class="n" style="transform:scaleX(0.92)">b</span><span class="n" style="width:10px">o</span><span class="n" style="width:10px">s</span><span class="n" style="width:10px">s</span><span style="position:relative;top:-1px">打</span><span style="position:relative;top:-1px">死</span><span style="position:relative;top:-1px">你</span><span style="position:relative;top:-1px">需</span><span style="position:relative;top:-1px">要</span></div>
<div class="c" style="top:522px;height:23px;color:#000;left:570px;width:110px;text-align:right;overflow:visible;"><span class="n">1</span><span class="n">6</span><span class="n" style="text-indent:-3px">.</span><span class="n">3</span><span class="n">3</span><span class="n">9</span><span class="n">8</span><span class="n">0</span><span class="n">8</span><span class="n">6</span><span class="n">8</span></div>
<div class="c" style="top:522px;height:23px;color:#000;left:687px;overflow:visible;"><span style="position:relative;top:-1px">回</span><span style="position:relative;top:-1px">合</span></div>
<div class="c" style="top:522px;height:23px;color:#000;left:767px;overflow:visible;"><span style="position:relative;top:-1px">道</span><span style="position:relative;top:-1px">士</span><span style="position:relative;top:-1px">攻</span><span style="position:relative;top:-1px">击</span><span class="n" style="transform:scaleX(0.77)">C</span><span class="n" style="transform:scaleX(0.71)">D</span></div>
<div class="c" style="top:522px;height:23px;color:#000;left:879px;width:123px;text-align:right;overflow:visible;"><span class="n">1</span></div>
<div class="c" style="top:546px;height:23px;color:#000;left:38px;overflow:visible;"><span style="position:relative;top:-1px">加</span><span style="position:relative;top:-1px">盾</span></div>
<div class="c" style="top:546px;height:23px;color:#000;left:115px;width:82px;text-align:right;overflow:visible;"><span class="n">5</span><span class="n" style="text-indent:-3px">.</span><span class="n">5</span><span class="n">2</span><span class="n">0</span><span class="n" style="transform:scaleX(0.58);position:relative;left:-2px">%</span></div>
<div class="c" style="top:546px;height:23px;color:#000;left:204px;overflow:visible;"><span style="position:relative;top:-1px">暴</span><span style="position:relative;top:-1px">击</span><span style="position:relative;top:-1px">伤</span><span style="position:relative;top:-1px">害</span></div>
<div class="c" style="top:546px;height:23px;color:#000;left:337px;width:90px;text-align:right;overflow:visible;"><span class="n">1</span><span class="n">6</span><span class="n">4</span><span class="n">8</span><span class="n">0</span><span class="n">3</span><span class="n">6</span><span class="n">5</span></div>
<div class="c" style="top:546px;height:23px;color:#000;left:767px;overflow:visible;"><span style="position:relative;top:-1px">道</span><span style="position:relative;top:-1px">士</span><span style="position:relative;top:-1px">加</span><span style="position:relative;top:-1px">盾</span></div>
<div class="c" style="top:546px;height:23px;color:#000;left:879px;width:123px;text-align:right;overflow:visible;"><span class="n">0</span><span class="n" style="text-indent:-3px">.</span><span class="n">0</span><span class="n">0</span><span class="n" style="transform:scaleX(0.58);position:relative;left:-2px">%</span></div>
<div class="c" style="top:546px;height:23px;color:#000;left:1006px;width:74px;overflow:hidden;text-align:right;"><span style="position:relative;left:29px"><span class="n">0</span><span class="n" style="text-indent:-3px">.</span><span class="n">0</span><span class="n">0</span></span></div>
<div class="c" style="top:570px;height:23px;color:#000;left:38px;overflow:visible;"><span style="position:relative;top:-1px">吸</span><span style="position:relative;top:-1px">血</span></div>
<div class="c" style="top:570px;height:23px;color:#000;left:115px;width:82px;text-align:right;overflow:visible;"><span class="n">2</span><span class="n">0</span><span class="n" style="text-indent:-3px">.</span><span class="n">0</span><span class="n">7</span><span class="n">0</span><span class="n" style="transform:scaleX(0.58);position:relative;left:-2px">%</span></div>
<div class="c" style="top:570px;height:23px;color:#000;left:767px;overflow:visible;"><span style="position:relative;top:-1px">道</span><span style="position:relative;top:-1px">士</span><span style="position:relative;top:-1px">减</span><span style="position:relative;top:-1px">防</span></div>
<div class="c" style="top:570px;height:23px;color:#000;left:879px;width:123px;text-align:right;overflow:visible;"><span class="n">5</span><span class="n" style="text-indent:-3px">.</span><span class="n">0</span><span class="n">0</span><span class="n" style="transform:scaleX(0.58);position:relative;left:-2px">%</span></div>
<div class="c" style="top:595px;height:23px;color:#000;left:38px;overflow:visible;"><span style="position:relative;top:-1px">反</span><span style="position:relative;top:-1px">伤</span></div>
<div class="c" style="top:595px;height:23px;color:#000;left:115px;width:82px;text-align:right;overflow:visible;"><span class="n">5</span><span class="n" style="text-indent:-3px">.</span><span class="n">8</span><span class="n">7</span><span class="n">0</span><span class="n" style="transform:scaleX(0.58);position:relative;left:-2px">%</span></div>
<div class="c" style="top:595px;height:23px;color:#000;left:337px;width:90px;text-align:right;overflow:visible;"><span class="n">3</span><span class="n">2</span><span class="n">0</span><span class="n">0</span><span class="n">0</span><span class="n">4</span><span class="n">0</span></div>
<div class="c" style="top:595px;height:23px;color:#000;left:434px;overflow:visible;"><span style="position:relative;top:-1px">婆</span><span style="position:relative;top:-1px">娑</span><span style="position:relative;top:-1px">星</span></div>
<div class="c" style="top:595px;height:23px;color:#000;left:570px;width:110px;text-align:right;overflow:visible;"><span class="n">3</span><span class="n">4</span><span class="n">4</span><span class="n">9</span><span class="n">0</span><span class="n">4</span><span class="n">0</span></div>
<div class="c" style="top:595px;height:23px;color:#000;left:767px;overflow:visible;"><span style="position:relative;top:-1px">道</span><span style="position:relative;top:-1px">士</span><span style="position:relative;top:-1px">反</span><span style="position:relative;top:-1px">伤</span></div>
<div class="c" style="top:595px;height:23px;color:#000;left:879px;width:123px;text-align:right;overflow:visible;"><span class="n">0</span><span class="n" style="text-indent:-3px">.</span><span class="n">0</span><span class="n">0</span><span class="n" style="transform:scaleX(0.58);position:relative;left:-2px">%</span></div>
<div class="c" style="top:619px;height:23px;color:#000;left:38px;overflow:visible;"><span style="position:relative;top:-1px">减</span><span style="position:relative;top:-1px">防</span></div>
<div class="c" style="top:619px;height:23px;color:#000;left:115px;width:82px;text-align:right;overflow:visible;"><span class="n">1</span><span class="n">9</span><span class="n" style="text-indent:-3px">.</span><span class="n">2</span><span class="n">3</span><span class="n">0</span><span class="n" style="transform:scaleX(0.58);position:relative;left:-2px">%</span></div>
<div class="c" style="top:619px;height:23px;color:#000;left:337px;width:90px;text-align:right;overflow:visible;"><span class="n">3</span><span class="n">3</span><span class="n">6</span><span class="n">0</span><span class="n">0</span><span class="n">4</span><span class="n">0</span></div>
<div class="c" style="top:619px;height:23px;color:#000;left:434px;overflow:visible;"><span style="position:relative;top:-1px">荒</span><span style="position:relative;top:-1px">芜</span><span style="position:relative;top:-1px">星</span></div>
<div class="c" style="top:619px;height:23px;color:#000;left:570px;width:110px;text-align:right;overflow:visible;"><span class="n">3</span><span class="n">6</span><span class="n">0</span><span class="n">4</span><span class="n">0</span><span class="n">4</span><span class="n">0</span></div>
<div class="c" style="top:619px;height:23px;color:#000;left:767px;overflow:visible;"><span style="position:relative;top:-1px">武</span><span style="position:relative;top:-1px">器</span><span style="position:relative;top:-1px">吸</span><span style="position:relative;top:-1px">血</span></div>
<div class="c" style="top:619px;height:23px;color:#000;left:879px;width:123px;text-align:right;overflow:visible;"><span class="n">6</span><span class="n" style="text-indent:-3px">.</span><span class="n">6</span><span class="n">5</span><span class="n" style="transform:scaleX(0.58);position:relative;left:-2px">%</span></div>
<div class="c" style="top:643px;height:23px;color:#000;left:337px;width:90px;text-align:right;overflow:visible;"><span class="n">3</span><span class="n">5</span><span class="n">2</span><span class="n">8</span><span class="n">0</span><span class="n">4</span><span class="n">0</span></div>
<div class="c" style="top:643px;height:23px;color:#000;left:434px;overflow:visible;"><span style="position:relative;top:-1px">霜</span><span style="position:relative;top:-1px">桓</span><span style="position:relative;top:-1px">星</span></div>
<div class="c" style="top:643px;height:23px;color:#000;left:767px;overflow:visible;"><span style="position:relative;top:-1px">头</span><span style="position:relative;top:-1px">冠</span><span style="position:relative;top:-1px">吸</span><span style="position:relative;top:-1px">血</span></div>
<div class="c" style="top:643px;height:23px;color:#000;left:879px;width:123px;text-align:right;overflow:visible;"><span class="n">5</span><span class="n" style="text-indent:-3px">.</span><span class="n">7</span><span class="n">6</span><span class="n" style="transform:scaleX(0.58);position:relative;left:-2px">%</span></div>
<div class="c" style="top:667px;height:23px;color:#000;left:337px;width:90px;text-align:right;overflow:visible;"><span class="n">3</span><span class="n">7</span><span class="n">0</span><span class="n">4</span><span class="n">0</span><span class="n">4</span><span class="n">0</span></div>
<div class="c" style="top:667px;height:23px;color:#000;left:434px;overflow:visible;"><span style="position:relative;top:-1px">毒</span><span style="position:relative;top:-1px">沼</span><span style="position:relative;top:-1px">星</span></div>
<div class="c" style="top:667px;height:23px;color:#000;left:767px;overflow:visible;"><span style="position:relative;top:-1px">衣</span><span style="position:relative;top:-1px">服</span><span style="position:relative;top:-1px">加</span><span style="position:relative;top:-1px">盾</span></div>
<div class="c" style="top:667px;height:23px;color:#000;left:879px;width:123px;text-align:right;overflow:visible;"><span class="n">0</span><span class="n" style="text-indent:-3px">.</span><span class="n">0</span><span class="n">0</span><span class="n" style="transform:scaleX(0.58);position:relative;left:-2px">%</span></div>
<div class="c" style="top:691px;height:23px;color:#000;left:337px;width:90px;text-align:right;overflow:visible;"><span class="n">3</span><span class="n">8</span><span class="n">8</span><span class="n">9</span><span class="n">0</span><span class="n">4</span><span class="n">0</span></div>
<div class="c" style="top:691px;height:23px;color:#000;left:434px;overflow:visible;"><span style="position:relative;top:-1px">墨</span><span style="position:relative;top:-1px">央</span><span style="position:relative;top:-1px">星</span></div>
<div class="c" style="top:691px;height:23px;color:#000;left:767px;overflow:visible;"><span style="position:relative;top:-1px">衣</span><span style="position:relative;top:-1px">服</span><span style="position:relative;top:-1px">吸</span><span style="position:relative;top:-1px">血</span></div>
<div class="c" style="top:691px;height:23px;color:#000;left:879px;width:123px;text-align:right;overflow:visible;"><span class="n">7</span><span class="n" style="text-indent:-3px">.</span><span class="n">6</span><span class="n">6</span><span class="n" style="transform:scaleX(0.58);position:relative;left:-2px">%</span></div>
<div class="c" style="top:715px;height:23px;color:#000;left:337px;width:90px;text-align:right;overflow:visible;"><span class="n">4</span><span class="n">0</span><span class="n">8</span><span class="n">3</span><span class="n">0</span><span class="n">4</span><span class="n">0</span></div>
<div class="c" style="top:715px;height:23px;color:#000;left:434px;overflow:visible;"><span style="position:relative;top:-1px">珈</span><span style="position:relative;top:-1px">蓝</span><span style="position:relative;top:-1px">武</span><span style="position:relative;top:-1px">星</span></div>
<div class="c" style="top:715px;height:23px;color:#000;left:767px;overflow:visible;"><span style="position:relative;top:-1px">鞋</span><span style="position:relative;top:-1px">反</span><span style="position:relative;top:-1px">伤</span></div>
<div class="c" style="top:715px;height:23px;color:#000;left:879px;width:123px;text-align:right;overflow:visible;"><span class="n">4</span><span class="n" style="text-indent:-3px">.</span><span class="n">5</span><span class="n">2</span><span class="n" style="transform:scaleX(0.58);position:relative;left:-2px">%</span></div>
<div class="c" style="top:739px;height:23px;color:#000;left:337px;width:90px;text-align:right;overflow:visible;"><span class="n">4</span><span class="n">2</span><span class="n">8</span><span class="n">7</span><span class="n">0</span><span class="n">4</span><span class="n">0</span></div>
<div class="c" style="top:739px;height:23px;color:#000;left:434px;overflow:visible;"><span style="position:relative;top:-1px">罗</span><span style="position:relative;top:-1px">摩</span><span style="position:relative;top:-1px">星</span></div>
<div class="c" style="top:739px;height:23px;color:#000;left:767px;overflow:visible;"><span style="position:relative;top:-1px">戒</span><span style="position:relative;top:-1px">指</span><span style="position:relative;top:-1px">减</span><span style="position:relative;top:-1px">防</span></div>
<div class="c" style="top:739px;height:23px;color:#000;left:879px;width:123px;text-align:right;overflow:visible;"><span class="n">6</span><span class="n" style="text-indent:-3px">.</span><span class="n">4</span><span class="n">1</span><span class="n" style="transform:scaleX(0.58);position:relative;left:-2px">%</span></div>
<div class="c" style="top:763px;height:23px;color:#000;left:337px;width:90px;text-align:right;overflow:visible;"><span class="n">4</span><span class="n">5</span><span class="n">0</span><span class="n">1</span><span class="n">0</span><span class="n">4</span><span class="n">0</span></div>
<div class="c" style="top:763px;height:23px;color:#000;left:434px;overflow:visible;"><span style="position:relative;top:-1px">敖</span><span style="position:relative;top:-1px">龙</span><span style="position:relative;top:-1px">星</span></div>
<div class="c" style="top:763px;height:23px;color:#000;left:767px;overflow:visible;"><span style="position:relative;top:-1px">宝</span><span style="position:relative;top:-1px">鉴</span><span style="position:relative;top:-1px">护</span><span style="position:relative;top:-1px">盾</span></div>
<div class="c" style="top:763px;height:23px;color:#000;left:879px;width:123px;text-align:right;overflow:visible;"><span class="n">4</span><span class="n" style="text-indent:-3px">.</span><span class="n">3</span><span class="n">2</span><span class="n" style="transform:scaleX(0.58);position:relative;left:-2px">%</span></div>
<div class="c" style="top:787px;height:23px;color:#000;left:337px;width:90px;text-align:right;overflow:visible;"><span class="n">4</span><span class="n">7</span><span class="n">2</span><span class="n">6</span><span class="n">0</span><span class="n">4</span><span class="n">0</span></div>
<div class="c" style="top:787px;height:23px;color:#000;left:434px;overflow:visible;"><span style="position:relative;top:-1px">仙</span><span style="position:relative;top:-1px">道</span><span style="position:relative;top:-1px">星</span></div>
<div class="c" style="top:787px;height:23px;color:#000;left:767px;overflow:visible;"><span style="position:relative;top:-1px">橙</span><span style="position:relative;top:-1px">宝</span><span style="position:relative;top:-1px">石</span><span style="position:relative;top:-1px">减</span><span style="position:relative;top:-1px">防</span></div>
<div class="c" style="top:787px;height:23px;color:#000;left:879px;width:123px;text-align:right;overflow:visible;"><span class="n">3</span><span class="n" style="text-indent:-3px">.</span><span class="n">9</span><span class="n">1</span><span class="n" style="transform:scaleX(0.58);position:relative;left:-2px">%</span></div>
<div class="c" style="top:811px;height:23px;color:#000;left:767px;overflow:visible;"><span style="position:relative;top:-1px">橙</span><span style="position:relative;top:-1px">宝</span><span style="position:relative;top:-1px">石</span><span style="position:relative;top:-1px">减</span><span style="position:relative;top:-1px">防</span></div>
<div class="c" style="top:811px;height:23px;color:#000;left:879px;width:123px;text-align:right;overflow:visible;"><span class="n">3</span><span class="n" style="text-indent:-3px">.</span><span class="n">9</span><span class="n">1</span><span class="n" style="transform:scaleX(0.58);position:relative;left:-2px">%</span></div>
<div class="c" style="top:835px;height:23px;color:#000;left:767px;overflow:visible;"><span style="position:relative;top:-1px">青</span><span style="position:relative;top:-1px">宝</span><span style="position:relative;top:-1px">石</span><span style="position:relative;top:-1px">加</span><span style="position:relative;top:-1px">盾</span></div>
<div class="c" style="top:835px;height:23px;color:#000;left:879px;width:123px;text-align:right;overflow:visible;"><span class="n">1</span><span class="n" style="text-indent:-3px">.</span><span class="n">2</span><span class="n">0</span><span class="n" style="transform:scaleX(0.58);position:relative;left:-2px">%</span></div>
<div class="c" style="top:859px;height:23px;color:#000;left:767px;overflow:visible;"><span style="position:relative;top:-1px">粉</span><span style="position:relative;top:-1px">宝</span><span style="position:relative;top:-1px">石</span><span style="position:relative;top:-1px">反</span><span style="position:relative;top:-1px">伤</span></div>
<div class="c" style="top:859px;height:23px;color:#000;left:879px;width:123px;text-align:right;overflow:visible;"><span class="n">1</span><span class="n" style="text-indent:-3px">.</span><span class="n">3</span><span class="n">5</span><span class="n" style="transform:scaleX(0.58);position:relative;left:-2px">%</span></div>
<div class="c" style="top:883px;height:23px;color:#000;left:767px;overflow:visible;"><span style="position:relative;top:-1px">魂</span><span style="position:relative;top:-1px">戒</span></div>
<div class="c" style="top:883px;height:23px;color:#000;left:879px;width:123px;text-align:right;overflow:visible;"><span class="n">1</span><span class="n">0</span><span class="n">0</span><span class="n">0</span><span class="n">0</span><span class="n">0</span></div>
<div style="position:absolute;left:335px;top:758px;width:97px;height:27px;border:2px solid #217346;box-sizing:border-box"></div>
<div style="position:absolute;left:427px;top:780px;width:7px;height:7px;background:#217346;border:1px solid #fff;border-right:none;border-bottom:none;box-sizing:border-box"></div>
<div style="position:absolute;left:1081px;top:255px;width:25px;height:664px;background:#e6e6e6"></div>
<div style="position:absolute;left:1084px;top:257px;width:19px;height:20px;background:#fff;border:1px solid #ababab;box-sizing:border-box"></div>
<svg style="position:absolute;left:1089px;top:264px;" width="10" height="6" viewBox="0 0 10 6"><path d="M0.5 5.5 L5 0.5 L9.5 5.5 Z" fill="#606060"/></svg>
<div style="position:absolute;left:1084px;top:276px;width:19px;height:180px;background:#fff;border:1px solid #ababab;box-sizing:border-box"></div>
<div style="position:absolute;left:1084px;top:456px;width:19px;height:447px;background:#dadada"></div>
<div style="position:absolute;left:1084px;top:901px;width:19px;height:18px;background:#fff;border:1px solid #ababab;box-sizing:border-box"></div>
<svg style="position:absolute;left:1089px;top:908px;" width="10" height="6" viewBox="0 0 10 6"><path d="M0.5 0.5 L5 5.5 L9.5 0.5 Z" fill="#606060"/></svg>
<div style="position:absolute;left:1px;top:920px;width:1105px;height:28px;background:#e6e6e6"></div>
<svg style="position:absolute;left:28px;top:928px;" width="7" height="11" viewBox="0 0 7 11"><path d="M6 0.5 L1 5.5 L6 10.5 Z" fill="#c0c0c0"/></svg>
<svg style="position:absolute;left:57px;top:928px;" width="7" height="11" viewBox="0 0 7 11"><path d="M1 0.5 L6 5.5 L1 10.5 Z" fill="#c0c0c0"/></svg>
<div style="position:absolute;left:104px;top:919px;width:83px;height:25px;background:#fff;border-left:1px solid #ababab;border-right:1px solid #ababab;box-sizing:border-box"></div>
<div style="position:absolute;left:104px;top:943px;width:83px;height:2px;background:#217346"></div>
<div style="position:absolute;left:116px;top:921px;font-family:'Liberation Sans',sans-serif;font-size:17px;line-height:21px;color:#217346;white-space:nowrap;font-weight:bold">Sheet1</div>
<div style="position:absolute;left:199px;top:921px;font-family:'Liberation Sans',sans-serif;font-size:17px;line-height:21px;color:#444;white-space:nowrap;">Sheet2</div>
<div style="position:absolute;left:268px;top:925px;width:1px;height:18px;background:#9a9a9a"></div>
<div style="position:absolute;left:281px;top:921px;font-family:'Liberation Sans',sans-serif;font-size:17px;line-height:21px;color:#444;white-space:nowrap;">Sheet3</div>
<div style="position:absolute;left:349px;top:925px;width:1px;height:18px;background:#9a9a9a"></div>
<svg style="position:absolute;left:383px;top:923px;" width="21" height="21" viewBox="0 0 21 21"><circle cx="10.5" cy="10.5" r="9.5" fill="none" stroke="#777" stroke-width="1.3"/><path d="M10.5 5 V16 M5 10.5 H16" stroke="#777" stroke-width="1.5"/></svg>
<div style="position:absolute;left:661px;top:927px;width:3px;height:3px;background:#aaa"></div>
<div style="position:absolute;left:661px;top:932px;width:3px;height:3px;background:#aaa"></div>
<div style="position:absolute;left:661px;top:937px;width:3px;height:3px;background:#aaa"></div>
<div style="position:absolute;left:679px;top:924px;width:402px;height:19px;background:#dadada"></div>
<div style="position:absolute;left:679px;top:924px;width:19px;height:19px;background:#fff;border:1px solid #ababab;box-sizing:border-box"></div>
<svg style="position:absolute;left:685px;top:929px;" width="6" height="10" viewBox="0 0 6 10"><path d="M5.5 0.5 L0.5 5 L5.5 9.5 Z" fill="#606060"/></svg>
<div style="position:absolute;left:697px;top:924px;width:108px;height:19px;background:#fff;border:1px solid #ababab;box-sizing:border-box"></div>
<div style="position:absolute;left:1062px;top:924px;width:19px;height:19px;background:#fff;border:1px solid #ababab;box-sizing:border-box"></div>
<svg style="position:absolute;left:1068px;top:929px;" width="6" height="10" viewBox="0 0 6 10"><path d="M0.5 0.5 L5.5 5 L0.5 9.5 Z" fill="#606060"/></svg>
<div style="position:absolute;left:1px;top:948px;width:1105px;height:1px;background:#d4d4d4"></div>
<div style="position:absolute;left:1px;top:949px;width:1105px;height:19px;background:#f3f3f3"></div>
<div style="position:absolute;left:10px;top:953px;font-family:'Liberation Sans',sans-serif;font-size:15px;line-height:19px;color:#444;white-space:nowrap;">就绪</div>
<div style="position:absolute;left:712px;top:949px;width:50px;height:19px;background:#c8c8c8"></div>
<svg style="position:absolute;left:729px;top:954px;" width="17" height="14" viewBox="0 0 17 14"><g fill="#5a5a5a"><rect x="0" y="0" width="16" height="1"/><rect x="0" y="5" width="16" height="1"/><rect x="0" y="10" width="16" height="1"/><rect x="0" y="0" width="1" height="14"/><rect x="5" y="0" width="1" height="14"/><rect x="10" y="0" width="1" height="14"/><rect x="15" y="0" width="1" height="14"/></g></svg>
<svg style="position:absolute;left:778px;top:954px;" width="17" height="14" viewBox="0 0 17 14"><path d="M0.75 15 V0.75 H16.25 V15" fill="none" stroke="#6b6b6b" stroke-width="1.5"/><path d="M4.5 15 V2.5 H12.5 V15" fill="none" stroke="#6b6b6b" stroke-width="1.2"/><path d="M6 5.5 H11 M6 8.5 H11 M6 11.5 H11" stroke="#6b6b6b" stroke-width="1.2"/></svg>
<svg style="position:absolute;left:828px;top:954px;" width="17" height="14" viewBox="0 0 17 14"><path d="M0.75 15 V0.75 H16.25 V15" fill="none" stroke="#6b6b6b" stroke-width="1.5"/><path d="M5.5 1 V8.5 M9.5 1 V8.5 M0.75 8.5 H9.5" fill="none" stroke="#6b6b6b" stroke-width="1.3"/></svg>
<div style="position:absolute;left:869px;top:962px;width:10px;height:1px;background:#555"></div>
<div style="position:absolute;left:885px;top:962px;width:125px;height:1px;background:#a8a8a8"></div>
<div style="position:absolute;left:945px;top:955px;width:6px;height:13px;background:#666"></div>
<div style="position:absolute;left:1016px;top:962px;width:10px;height:1px;background:#555"></div>
<div style="position:absolute;left:1020px;top:957px;width:1px;height:10px;background:#555"></div>
<div style="position:absolute;left:1042px;top:954px;font-family:'Liberation Sans',sans-serif;font-size:16px;line-height:20px;color:#444;white-space:nowrap;">100%</div>
<div style="position:absolute;left:0px;top:0px;width:1px;height:968px;background:#217346"></div>
<div style="position:absolute;left:1106px;top:0px;width:1px;height:968px;background:#217346"></div>
</body></html>
